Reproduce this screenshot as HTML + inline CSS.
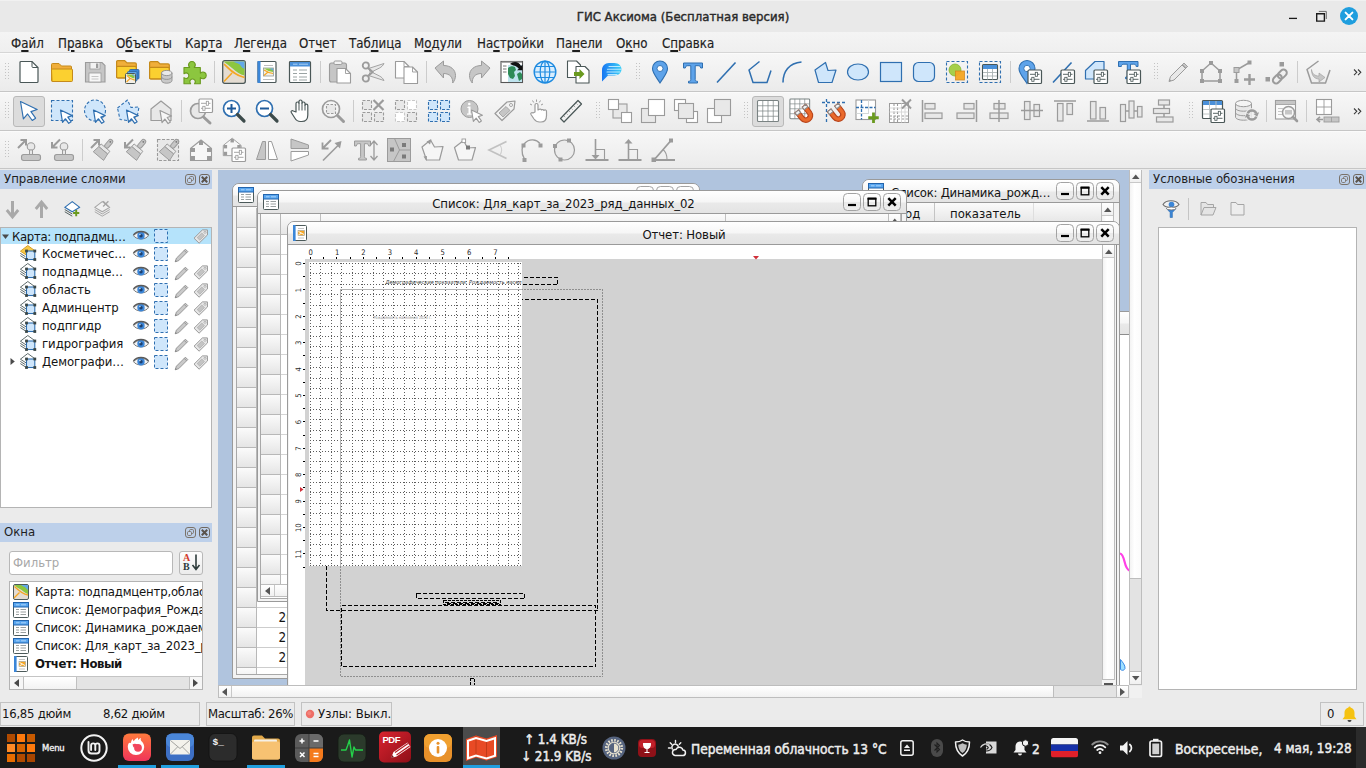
<!DOCTYPE html>
<html lang="ru"><head><meta charset="utf-8"><title>ГИС Аксиома (Бесплатная версия)</title>
<style>
html,body{margin:0;padding:0;background:#ebebeb;}
body{width:1366px;height:768px;overflow:hidden;position:relative;font-family:"DejaVu Sans Condensed","Liberation Sans",sans-serif;font-size:13px;color:#1e1e1e;}
div,svg{position:absolute;box-sizing:border-box;}
svg{overflow:visible;}
.t{white-space:nowrap;line-height:18px;}
u{text-decoration:underline;text-underline-offset:1.500px;text-decoration-thickness:1.600px;}
.clip{overflow:hidden;}
</style></head>
<body>
<!-- chrome -->
<div style="left:0px;top:0px;width:1366px;height:32px;background:#e9e9e9"></div>
<div style="left:0px;top:0px;width:1366px;height:1px;background:#f1f1f1"></div>
<div class="t" style="left:0px;top:8px;width:1366px;text-align:center;font-size:13.050px;line-height:18px;color:#2a2a2a;-webkit-text-stroke:0.400px #2a2a2a">ГИС Аксиома (Бесплатная версия)</div>
<svg style="left:1281px;top:4px;" width="80" height="24" viewBox="0 0 80 24"><path d="M8 14.400h8" stroke="#1a1a1a" stroke-width="1.300" fill="none"/><path d="M35.700 9.700h7.700v7.400h-7.700z" stroke="#1a1a1a" stroke-width="1.400" fill="none"/><path d="M37.800 7.400h7.500v7.600" stroke="#6a6a6a" stroke-width="1" fill="none"/><circle cx="68" cy="12" r="9" fill="#1f9ede"/><path d="M64.600 8.600l6.800 6.800M71.400 8.600l-6.800 6.800" stroke="#fff" stroke-width="2" stroke-linecap="round"/></svg>
<div style="left:0px;top:32px;width:1366px;height:20px;background:linear-gradient(#f4f4f4,#efefef)"></div>
<div style="left:0px;top:52px;width:1366px;height:1px;background:#d6d6d6"></div>
<div class="t" style="left:11px;top:33.5px;font-size:13.200px;line-height:19px;color:#1e1e1e;-webkit-text-stroke:0.150px #1e1e1e">Ф<u>а</u>йл</div>
<div class="t" style="left:58px;top:33.5px;font-size:13.200px;line-height:19px;color:#1e1e1e;-webkit-text-stroke:0.150px #1e1e1e">П<u>р</u>авка</div>
<div class="t" style="left:116px;top:33.5px;font-size:13.200px;line-height:19px;color:#1e1e1e;-webkit-text-stroke:0.150px #1e1e1e">О<u>б</u>ъекты</div>
<div class="t" style="left:185px;top:33.5px;font-size:13.200px;line-height:19px;color:#1e1e1e;-webkit-text-stroke:0.150px #1e1e1e">Кар<u>т</u>а</div>
<div class="t" style="left:234px;top:33.5px;font-size:13.200px;line-height:19px;color:#1e1e1e;-webkit-text-stroke:0.150px #1e1e1e">Л<u>е</u>генда</div>
<div class="t" style="left:299px;top:33.5px;font-size:13.200px;line-height:19px;color:#1e1e1e;-webkit-text-stroke:0.150px #1e1e1e">От<u>ч</u>ет</div>
<div class="t" style="left:349px;top:33.5px;font-size:13.200px;line-height:19px;color:#1e1e1e;-webkit-text-stroke:0.150px #1e1e1e">Таб<u>л</u>ица</div>
<div class="t" style="left:414px;top:33.5px;font-size:13.200px;line-height:19px;color:#1e1e1e;-webkit-text-stroke:0.150px #1e1e1e">М<u>о</u>дули</div>
<div class="t" style="left:477px;top:33.5px;font-size:13.200px;line-height:19px;color:#1e1e1e;-webkit-text-stroke:0.150px #1e1e1e">На<u>с</u>тройки</div>
<div class="t" style="left:556px;top:33.5px;font-size:13.200px;line-height:19px;color:#1e1e1e;-webkit-text-stroke:0.150px #1e1e1e">Па<u>н</u>ели</div>
<div class="t" style="left:616px;top:33.5px;font-size:13.200px;line-height:19px;color:#1e1e1e;-webkit-text-stroke:0.150px #1e1e1e">О<u>к</u>но</div>
<div class="t" style="left:662px;top:33.5px;font-size:13.200px;line-height:19px;color:#1e1e1e;-webkit-text-stroke:0.150px #1e1e1e">С<u>п</u>равка</div>
<div style="left:0px;top:53px;width:1366px;height:38px;background:linear-gradient(#f7f7f7,#ebebeb)"></div>
<div style="left:0px;top:53px;width:1366px;height:1px;background:#fbfbfb"></div>
<div style="left:0px;top:91px;width:1366px;height:1px;background:#c6c6c6"></div>
<div style="left:0px;top:92px;width:1366px;height:38px;background:linear-gradient(#f7f7f7,#ebebeb)"></div>
<div style="left:0px;top:92px;width:1366px;height:1px;background:#fbfbfb"></div>
<div style="left:0px;top:130px;width:1366px;height:1px;background:#c6c6c6"></div>
<div style="left:0px;top:131px;width:1366px;height:37px;background:linear-gradient(#f7f7f7,#ebebeb)"></div>
<div style="left:0px;top:131px;width:1366px;height:1px;background:#fbfbfb"></div>
<div style="left:0px;top:168px;width:1366px;height:1px;background:#c6c6c6"></div>
<div style="left:0px;top:169px;width:1366px;height:534px;background:#ebebeb"></div>
<!-- icons -->
<div style="left:13px;top:96px;width:32px;height:31px;background:#dcdcdc;border:1px solid #b9b9b9;border-radius:3px"></div>
<div style="left:752px;top:96px;width:32px;height:31px;background:#dcdcdc;border:1px solid #b9b9b9;border-radius:3px"></div>
<svg style="left:17px;top:60px;" width="24" height="24" viewBox="0 0 24 24"><path d="M3 2.500a1 1 0 0 1 1-1h11l6 6v14a1 1 0 0 1-1 1h-16a1 1 0 0 1-1-1z" fill="#fff" stroke="#4a5757" stroke-width="1.200"/><path d="M15 1.500v5a1 1 0 0 0 1 1h5" fill="none" stroke="#4a5757" stroke-width="1"/></svg>
<svg style="left:50px;top:60px;" width="24" height="24" viewBox="0 0 24 24"><path d="M1.500 4.500a1 1 0 0 1 1-1h6.500l2.500 2.500h9a1 1 0 0 1 1 1v13.500a1 1 0 0 1-1 1h-18a1 1 0 0 1-1-1z" fill="#f0ae3a" stroke="#c58a1a" stroke-width="1"/><path d="M1.500 10a1 1 0 0 1 1-1h19a1 1 0 0 1 1 1v10.500a1 1 0 0 1-1 1h-18.500a1 1 0 0 1-1-1z" fill="#fbd030" stroke="#c58a1a" stroke-width="1"/></svg>
<svg style="left:83px;top:60px;" width="24" height="24" viewBox="0 0 24 24"><path d="M2.500 2.500h16.500l3 3v16.500h-19.500z" fill="#c6c6c6" stroke="#9b9b9b" stroke-width="1.100"/><rect x="7" y="2.500" width="10" height="6.500" fill="#f2f2f2" stroke="#9b9b9b" stroke-width="0.8"/><rect x="13" y="3.500" width="2.300" height="4.500" fill="#9b9b9b"/><rect x="6" y="13" width="12" height="9" fill="#f7f7f7" stroke="#9b9b9b" stroke-width="0.8"/><path d="M8.500 16.500h7M8.500 19h7" stroke="#c6c6c6" stroke-width="1"/></svg>
<svg style="left:116px;top:60px;" width="24" height="24" viewBox="0 0 24 24"><g transform="translate(0 0) scale(1.230 1.150)"><path d="M0.500 1.500a1 1 0 0 1 1-1h5.500l2 2h6.500a1 1 0 0 1 1 1v11a1 1 0 0 1-1 1h-14a1 1 0 0 1-1-1z" fill="#f0ae3a" stroke="#c58a1a" stroke-width="1"/><path d="M0.500 6.500a1 1 0 0 1 1-1h14a1 1 0 0 1 1 1v8a1 1 0 0 1-1 1h-14a1 1 0 0 1-1-1z" fill="#fbd030" stroke="#c58a1a" stroke-width="1"/></g><rect x="13.500" y="9.500" width="9.500" height="9.500" rx="1" fill="#3b86d8" stroke="#2a5f9e" stroke-width="0.8"/><rect x="11.500" y="11.500" width="9.500" height="9.500" rx="1" fill="#62a8e8" stroke="#2a5f9e" stroke-width="0.8"/><rect x="9.500" y="13.500" width="10" height="10" rx="1" fill="#f4efe6" stroke="#4a5757" stroke-width="1"/><path d="M10.500 14.500h8v4c-3-0.500-5-2-8-4z" fill="#8cc63f"/><path d="M15.500 14.500h3v2.300z" fill="#62a8e8"/><path d="M10.500 22l3.500-3.500M10.800 15.300c2 2.500 4.500 4 8 4.800" stroke="#f5a623" stroke-width="1.100" fill="none"/></svg>
<svg style="left:149px;top:60px;" width="24" height="24" viewBox="0 0 24 24"><g transform="translate(0 1) scale(1.230 1.150)"><path d="M0.500 1.500a1 1 0 0 1 1-1h5.500l2 2h6.500a1 1 0 0 1 1 1v11a1 1 0 0 1-1 1h-14a1 1 0 0 1-1-1z" fill="#f0ae3a" stroke="#c58a1a" stroke-width="1"/><path d="M0.500 6.500a1 1 0 0 1 1-1h14a1 1 0 0 1 1 1v8a1 1 0 0 1-1 1h-14a1 1 0 0 1-1-1z" fill="#fbd030" stroke="#c58a1a" stroke-width="1"/></g><path d="M12.500 13v7.500c0 1.600 2.400 2.700 5.200 2.700s5.300-1.100 5.300-2.700v-7.500z" fill="#c9c9c9" stroke="#8e8e8e" stroke-width="0.9"/><ellipse cx="17.750" cy="13" rx="5.250" ry="2.600" fill="#e9e9e9" stroke="#8e8e8e" stroke-width="0.9"/><path d="M12.500 16.700c0 1.600 2.400 2.700 5.200 2.700s5.300-1.100 5.300-2.700" fill="none" stroke="#8e8e8e" stroke-width="0.9"/></svg>
<svg style="left:182px;top:60px;" width="24" height="24" viewBox="0 0 24 24"><path transform="translate(-1.300 -1.300) scale(1.090)" d="M3 8h5.200c-1.300-1.600-1.200-3.200-0.300-4.300 1.200-1.500 3.600-1.500 4.800 0 0.900 1.100 1 2.700-0.300 4.300h5.600v5.200c1.600-1.300 3.200-1.200 4.300-0.300 1.500 1.200 1.500 3.600 0 4.800-1.100 0.900-2.700 1-4.300-0.300v5.600h-5.300c1-1.400 0.900-2.700 0.100-3.600-1-1.100-2.800-1.100-3.800 0-0.800 0.900-0.900 2.200 0.100 3.600h-6.100v-5.600c1.400 1 2.700 0.900 3.600 0.100 1.100-1 1.100-2.800 0-3.800-0.900-0.800-2.200-0.900-3.600 0.100z" fill="#8cc63f" stroke="#6a9a1f" stroke-width="1" stroke-linejoin="round"/></svg>
<svg style="left:222px;top:60px;" width="24" height="24" viewBox="0 0 24 24"><rect x="0.700" y="0.700" width="22.600" height="22.600" rx="2" fill="#e4dcd2" stroke="#4a5757" stroke-width="1.300"/><path d="M1.500 1.500h21v14c-4.500-1-8.500-4-12.500-7.500-3-2.600-6-4.500-8.500-6.500z" fill="#8cc63f"/><path d="M11.500 1.500h11v7.500c-1.500-1-3-1.500-4-3.500-1.500-2.500-4.500-2-7-4z" fill="#62a8e8"/><path d="M2 21.500l8-8.500M2 4c5 5 11 11.500 20.500 13.500" stroke="#f5a623" stroke-width="1.500" fill="none"/></svg>
<svg style="left:255px;top:60px;" width="24" height="24" viewBox="0 0 24 24"><rect x="3" y="1.500" width="18" height="21" rx="1" fill="#fff" stroke="#4a5757" stroke-width="1.200"/><rect x="2.500" y="1" width="3" height="22" fill="#3b86d8"/><path d="M9 5.500h9M8 19.500h11" stroke="#b5b5b5" stroke-width="0.9"/><rect x="8.500" y="8" width="10" height="8" fill="#f4efe6" stroke="#8e9a9a" stroke-width="0.8"/><path d="M9 8.500h9v3.500c-3-0.300-6-1.500-9-3.500z" fill="#8cc63f"/><path d="M14 8.500h4v2z" fill="#62a8e8"/><path d="M9 15.500l4-3.500M9 10c3 2 5 3 9 3.500" stroke="#f5a623" stroke-width="1.100" fill="none"/></svg>
<svg style="left:288px;top:60px;" width="24" height="24" viewBox="0 0 24 24"><rect x="1.500" y="1.500" width="21" height="21" rx="1" fill="#fff" stroke="#4a5757" stroke-width="1.200"/><rect x="2" y="2" width="20" height="4.500" fill="#4a90d9"/><path d="M5 4.200h4.500M11 4.200h9" stroke="#a9cff5" stroke-width="1"/><path d="M5 10h4M11 10h8M5 13.500h4M11 13.500h8M5 17h4M11 17h8M5 20h4M11 20h8" stroke="#9aa3a3" stroke-width="1"/></svg>
<svg style="left:328px;top:60px;" width="24" height="24" viewBox="0 0 24 24"><rect x="1.500" y="3" width="17" height="19" rx="2" fill="#c6c6c6" stroke="#9b9b9b" stroke-width="1.100"/><rect x="6" y="1" width="8" height="3.500" rx="1.200" fill="#f2f2f2" stroke="#9b9b9b" stroke-width="1"/><path d="M9 8.500h8.500l5 5v9.500h-13.500z" fill="#fff" stroke="#9b9b9b" stroke-width="1.100" stroke-linejoin="round"/><path d="M17.500 8.500v5h5" fill="none" stroke="#9b9b9b" stroke-width="0.9"/></svg>
<svg style="left:361px;top:60px;" width="24" height="24" viewBox="0 0 24 24"><path d="M7.500 8.500l15.500-5c-1 2-2.500 3.500-4.500 4.500l-9 4.500z" fill="#e8e8e8" stroke="#9b9b9b" stroke-width="0.9" stroke-linejoin="round"/><path d="M7.500 15.500l15.500 5c-1-2-2.500-3.500-4.500-4.500l-9-4.500z" fill="#e8e8e8" stroke="#9b9b9b" stroke-width="0.9" stroke-linejoin="round"/><circle cx="4.800" cy="5.500" r="3.100" fill="none" stroke="#9b9b9b" stroke-width="1.800"/><circle cx="4.800" cy="18.500" r="3.100" fill="none" stroke="#9b9b9b" stroke-width="1.800"/><path d="M6.800 7.800l5 4.200-5 4.200" stroke="#9b9b9b" stroke-width="1.800" fill="none"/></svg>
<svg style="left:394px;top:60px;" width="24" height="24" viewBox="0 0 24 24"><path d="M1.500 1.500h8.500l5 5v11.500h-13.500z" fill="#fff" stroke="#9b9b9b" stroke-width="1.100" stroke-linejoin="round"/><path d="M10 1.500v5h5" fill="none" stroke="#9b9b9b" stroke-width="0.9"/><path d="M10 7h8.500l5 5v11.500h-13.500z" fill="#fff" stroke="#9b9b9b" stroke-width="1.100" stroke-linejoin="round"/><path d="M18.500 7v5h5" fill="none" stroke="#9b9b9b" stroke-width="0.9"/></svg>
<svg style="left:434px;top:60px;" width="24" height="24" viewBox="0 0 24 24"><path d="M1 8l8.500-7v4.500c7 0 12 4 12 10 0 3-1.200 5.500-2.800 7.500 0.300-5-2.200-9.500-9.200-9.500v4.500z" fill="#c6c6c6" stroke="#9b9b9b" stroke-width="1" stroke-linejoin="round"/></svg>
<svg style="left:467px;top:60px;" width="24" height="24" viewBox="0 0 24 24"><path d="M23 8l-8.500-7v4.500c-7 0-12 4-12 10 0 3 1.200 5.500 2.800 7.500-0.300-5 2.200-9.500 9.200-9.500v4.500z" fill="#c6c6c6" stroke="#9b9b9b" stroke-width="1" stroke-linejoin="round"/></svg>
<svg style="left:500px;top:60px;" width="24" height="24" viewBox="0 0 24 24"><rect x="1" y="1.500" width="21.500" height="21" fill="#fff" stroke="#555" stroke-width="1.100"/><path d="M1.500 2h20.500" stroke="#8a8a8a" stroke-width="1.400"/><path d="M3 6h3.500M3 9h3.500M3 12h3.500" stroke="#777" stroke-width="1"/><rect x="8" y="5" width="14" height="17" fill="#bfe3ee"/><path d="M8 8c2-2 5-2.500 7-1l1 3-2 2 1 4-2 3-3-1-2-4zM17 14l3-2 2 2v5l-3 2z" fill="#2e8b57"/><path d="M10 4c3-3 9-3 11 2l1.500-1.200v5.500h-5.500l1.800-1.600c-2-3-6-3-8.800-4.700z" fill="#111"/></svg>
<svg style="left:533px;top:60px;" width="24" height="24" viewBox="0 0 24 24"><circle cx="12" cy="12" r="10.800" fill="#d9eefe" stroke="#1e8be0" stroke-width="1.400"/><ellipse cx="12" cy="12" rx="4.800" ry="10.800" fill="none" stroke="#1e8be0" stroke-width="1.200"/><path d="M12 1.200v21.600M1.200 12h21.600M3 6.500h18M3 17.500h18" stroke="#1e8be0" stroke-width="1.200" fill="none"/></svg>
<svg style="left:566px;top:60px;" width="24" height="24" viewBox="0 0 24 24"><path d="M1.500 1h9l4 4v12.500h-13z" fill="#fff" stroke="#4a5757" stroke-width="1.100" stroke-linejoin="round"/><path d="M10 6.500h9l4 4v12.500h-13z" fill="#fff" stroke="#4a5757" stroke-width="1.100" stroke-linejoin="round"/><path d="M8 12h5.500v-3l5 5-5 5v-3h-5.500z" fill="#6a9a1f"/></svg>
<svg style="left:599px;top:60px;" width="24" height="24" viewBox="0 0 24 24"><defs><linearGradient id="chg" x1="0" y1="0" x2="1" y2="0"><stop offset="0" stop-color="#1877f2"/><stop offset="1" stop-color="#3fd0f7"/></linearGradient></defs><path d="M3 21.500v-11.500c0-4 3-7 7-7h5.500c4 0 7 2.800 7 6.300s-3 6.200-7 6.200h-6.500z" fill="url(#chg)"/><path d="M10 6.500h11M8.500 9.300h13.500M8 12h13M9 14.500h9" stroke="#c9f0ff" stroke-width="1.100" stroke-linecap="round" opacity="0.9"/></svg>
<svg style="left:648px;top:60px;" width="24" height="24" viewBox="0 0 24 24"><path d="M12 23c-4-6.500-7.500-10-7.500-14.500a7.500 7.500 0 0 1 15 0c0 4.500-3.500 8-7.500 14.500z" fill="#5ea3ea" stroke="#2f6fb0" stroke-width="1.100"/><circle cx="12" cy="8.500" r="3" fill="#fff" stroke="#2f6fb0" stroke-width="0.9"/></svg>
<svg style="left:681px;top:60px;" width="24" height="24" viewBox="0 0 24 24"><path d="M2.500 3h19v5h-1.800c-0.200-1.600-0.900-2.300-2.500-2.300h-3v13.800c0 1.300 0.600 1.700 2.300 1.800v1.700h-9v-1.700c1.700-0.100 2.300-0.500 2.300-1.800v-13.800h-3c-1.600 0-2.300 0.700-2.500 2.300h-1.800z" fill="#5ea3ea" stroke="#2f6fb0" stroke-width="1" stroke-linejoin="round"/></svg>
<svg style="left:714px;top:60px;" width="24" height="24" viewBox="0 0 24 24"><path d="M3 22.500l18.500-20" stroke="#2f6fb0" stroke-width="1.600" fill="none"/></svg>
<svg style="left:747px;top:60px;" width="24" height="24" viewBox="0 0 24 24"><path d="M12.500 1.500l-10.500 8.500 4 12.500h14l4-12" stroke="#2f6fb0" stroke-width="1.500" fill="none" stroke-linejoin="round"/></svg>
<svg style="left:780px;top:60px;" width="24" height="24" viewBox="0 0 24 24"><path d="M3 22.500c0-11 6-19.500 18.500-20.500" stroke="#2f6fb0" stroke-width="1.600" fill="none"/></svg>
<svg style="left:813px;top:60px;" width="24" height="24" viewBox="0 0 24 24"><path d="M2 10l10.500-7.500 2.500 8 8-0.500-4 12.500h-13.500z" fill="#cfe6fb" stroke="#2f6fb0" stroke-width="1.200" stroke-linejoin="round"/></svg>
<svg style="left:846px;top:60px;" width="24" height="24" viewBox="0 0 24 24"><ellipse cx="12" cy="12" rx="10.500" ry="8" fill="#cfe6fb" stroke="#2f6fb0" stroke-width="1.200"/></svg>
<svg style="left:879px;top:60px;" width="24" height="24" viewBox="0 0 24 24"><rect x="1.500" y="2.500" width="21" height="19" fill="#cfe6fb" stroke="#2f6fb0" stroke-width="1.200"/></svg>
<svg style="left:912px;top:60px;" width="24" height="24" viewBox="0 0 24 24"><rect x="1.500" y="2.500" width="21" height="19" rx="5" fill="#cfe6fb" stroke="#2f6fb0" stroke-width="1.200"/></svg>
<svg style="left:945px;top:60px;" width="24" height="24" viewBox="0 0 24 24"><rect x="1.500" y="1.500" width="21" height="21" fill="none" stroke="#2f6fb0" stroke-width="1.100" stroke-dasharray="3 2"/><circle cx="10" cy="10" r="6" fill="#a6cf4a" stroke="#84b52c" stroke-width="0.8"/><rect x="10.500" y="11" width="9" height="9" fill="#f5a623" stroke="#d4851a" stroke-width="0.8" opacity="0.95"/></svg>
<svg style="left:978px;top:60px;" width="24" height="24" viewBox="0 0 24 24"><rect x="1.500" y="1.500" width="21" height="21" fill="none" stroke="#2f6fb0" stroke-width="1.100" stroke-dasharray="3 2"/><rect x="4.500" y="4.500" width="15" height="15" rx="1" fill="#fff" stroke="#4a5757" stroke-width="1.100"/><rect x="5" y="5" width="14" height="4" fill="#4a90d9"/><path d="M9.500 9v10.500M14.500 9v10.500M5 12.500h14M5 16h14" stroke="#aab3b3" stroke-width="0.9"/></svg>
<svg style="left:1018px;top:60px;" width="24" height="24" viewBox="0 0 24 24"><path d="M9 23.500c-4-6.500-8-10-8-15a8 8 0 0 1 16 0c0 2-1 4-2 6z" fill="#5ea3ea" stroke="#2f6fb0" stroke-width="1.100"/><circle cx="9" cy="8.500" r="3.200" fill="#fff" stroke="#2f6fb0" stroke-width="0.9"/><rect x="10" y="10" width="13.500" height="13.500" rx="1" fill="#fff" stroke="#4a5757" stroke-width="1.200"/><path d="M12 14.300h9.500M12 19.300h9.500" stroke="#4a5757" stroke-width="0.9"/><rect x="17.300" y="12.300" width="2.200" height="4" fill="#fff" stroke="#4a5757" stroke-width="0.8"/><rect x="13.800" y="17.300" width="2.200" height="4" fill="#fff" stroke="#4a5757" stroke-width="0.8"/></svg>
<svg style="left:1051px;top:60px;" width="24" height="24" viewBox="0 0 24 24"><path d="M2 22.500l18.500-20" stroke="#2f6fb0" stroke-width="1.600" fill="none"/><rect x="10" y="10" width="13.500" height="13.500" rx="1" fill="#fff" stroke="#4a5757" stroke-width="1.200"/><path d="M12 14.300h9.500M12 19.300h9.500" stroke="#4a5757" stroke-width="0.9"/><rect x="17.300" y="12.300" width="2.200" height="4" fill="#fff" stroke="#4a5757" stroke-width="0.8"/><rect x="13.800" y="17.300" width="2.200" height="4" fill="#fff" stroke="#4a5757" stroke-width="0.8"/></svg>
<svg style="left:1084px;top:60px;" width="24" height="24" viewBox="0 0 24 24"><path d="M1.500 10.500l9.500-9h9v17.500h-18.500z" fill="#cfe6fb" stroke="#2f6fb0" stroke-width="1.200" stroke-linejoin="round"/><rect x="10" y="10" width="13.500" height="13.500" rx="1" fill="#fff" stroke="#4a5757" stroke-width="1.200"/><path d="M12 14.300h9.500M12 19.300h9.500" stroke="#4a5757" stroke-width="0.9"/><rect x="17.300" y="12.300" width="2.200" height="4" fill="#fff" stroke="#4a5757" stroke-width="0.8"/><rect x="13.800" y="17.300" width="2.200" height="4" fill="#fff" stroke="#4a5757" stroke-width="0.8"/></svg>
<svg style="left:1117px;top:60px;" width="24" height="24" viewBox="0 0 24 24"><path d="M1.500 1.500h19.500v5h-1.800c-0.200-1.600-0.900-2.300-2.500-2.300h-3.200v14.500h-5v-1.500c1.200-0.100 1.800-0.500 1.800-1.800v-11.200h-3.500c-1.600 0-2.300 0.700-2.500 2.300h-2.800z" fill="#5ea3ea" stroke="#2f6fb0" stroke-width="1" stroke-linejoin="round"/><rect x="10" y="10" width="13.500" height="13.500" rx="1" fill="#fff" stroke="#4a5757" stroke-width="1.200"/><path d="M12 14.300h9.500M12 19.300h9.500" stroke="#4a5757" stroke-width="0.9"/><rect x="17.300" y="12.300" width="2.200" height="4" fill="#fff" stroke="#4a5757" stroke-width="0.8"/><rect x="13.800" y="17.300" width="2.200" height="4" fill="#fff" stroke="#4a5757" stroke-width="0.8"/></svg>
<svg style="left:1166px;top:60px;" width="24" height="24" viewBox="0 0 24 24"><path d="M3 21.500l1.500-5 13.500-13.500 3.500 3.500-13.500 13.500z" fill="#e8e8e8" stroke="#9b9b9b" stroke-width="1" stroke-linejoin="round"/><path d="M16 5l3.500 3.500" stroke="#9b9b9b" stroke-width="1"/><path d="M18 3l3.500 3.500-1.500 1.500-3.500-3.500z" fill="#c6c6c6" stroke="#9b9b9b" stroke-width="0.8"/><path d="M3 21.500l0.700-2.400 1.700 1.700z" fill="#9b9b9b"/></svg>
<svg style="left:1199px;top:60px;" width="24" height="24" viewBox="0 0 24 24"><path d="M3 11l9-8 9 8v10h-18z" fill="none" stroke="#9b9b9b" stroke-width="1.500" stroke-linejoin="round"/><rect x="10" y="1" width="4" height="4" fill="#9b9b9b"/><rect x="1" y="9" width="4" height="4" fill="#9b9b9b"/><rect x="19" y="9" width="4" height="4" fill="#9b9b9b"/><rect x="1" y="19" width="4" height="4" fill="#9b9b9b"/><rect x="19" y="19" width="4" height="4" fill="#9b9b9b"/></svg>
<svg style="left:1232px;top:60px;" width="24" height="24" viewBox="0 0 24 24"><path d="M4.500 21v-11l13-7.500" stroke="#9b9b9b" stroke-width="1.500" fill="none"/><rect x="2" y="7.500" width="5" height="5" fill="#c6c6c6" stroke="#9b9b9b" stroke-width="1"/><rect x="15.500" y="0.500" width="4" height="4" fill="#9b9b9b"/><rect x="2.500" y="19" width="4" height="4" fill="#9b9b9b"/><path d="M17.500 14v11M12 19.500h11" stroke="#9b9b9b" stroke-width="2.400"/></svg>
<svg style="left:1265px;top:60px;" width="24" height="24" viewBox="0 0 24 24"><rect x="14.500" y="2" width="4.500" height="4.500" fill="#9b9b9b"/><rect x="0.500" y="17" width="4.500" height="4.500" fill="#9b9b9b"/><g transform="rotate(-45 15 16)" fill="none" stroke="#9b9b9b" stroke-width="2"><rect x="6" y="13" width="10" height="6.500" rx="3.250"/><rect x="13" y="13" width="10" height="6.500" rx="3.250"/></g></svg>
<svg style="left:1305px;top:60px;" width="24" height="24" viewBox="0 0 24 24"><path d="M13.500 1l-11.500 8.500 4.500 13.500h14l4.500-13" stroke="#9b9b9b" stroke-width="1.500" fill="none" stroke-linejoin="round"/><path d="M6.500 9.500c0.500 4 3 6.500 7.500 6.500v-3l6 4.500-6 4.500v-3c-5 0-7.500-4-7.500-9.500z" fill="#c6c6c6" stroke="#9b9b9b" stroke-width="0.6"/></svg>
<svg style="left:17px;top:99px;" width="24" height="24" viewBox="0 0 24 24"><path transform="translate(3.5 2.5) scale(1.45)" d="M0 0l11.500 5.500-4.300 1.500 3.200 4.500-2.300 1.600-3.200-4.500-2.900 3.400z" fill="#fff" stroke="#2f6fb0" stroke-width="0.8" stroke-linejoin="round"/></svg>
<svg style="left:50px;top:99px;" width="24" height="24" viewBox="0 0 24 24"><rect x="1.500" y="1.500" width="21" height="20" fill="#cfe6fb" stroke="#2f6fb0" stroke-width="1.100" stroke-dasharray="3 2"/><path transform="translate(10.5 11) scale(1.02)" d="M0 0l11.500 5.500-4.300 1.500 3.200 4.500-2.300 1.600-3.200-4.500-2.900 3.400z" fill="#fff" stroke="#2f6fb0" stroke-width="1.2" stroke-linejoin="round"/></svg>
<svg style="left:83px;top:99px;" width="24" height="24" viewBox="0 0 24 24"><circle cx="12" cy="11.500" r="10.500" fill="#cfe6fb" stroke="#2f6fb0" stroke-width="1.100" stroke-dasharray="3 2"/><path transform="translate(10.5 11) scale(1.02)" d="M0 0l11.500 5.500-4.300 1.500 3.200 4.500-2.300 1.600-3.200-4.500-2.900 3.400z" fill="#fff" stroke="#2f6fb0" stroke-width="1.2" stroke-linejoin="round"/></svg>
<svg style="left:116px;top:99px;" width="24" height="24" viewBox="0 0 24 24"><path d="M1.500 9l10-8 3.500 7.500 8-0.500-1.500 8-7 6-10.500-1.500z" fill="#cfe6fb" stroke="#2f6fb0" stroke-width="1.100" stroke-dasharray="3 2" stroke-linejoin="round"/><path transform="translate(10.5 11) scale(1.02)" d="M0 0l11.500 5.500-4.300 1.500 3.200 4.500-2.300 1.600-3.200-4.500-2.900 3.400z" fill="#fff" stroke="#2f6fb0" stroke-width="1.2" stroke-linejoin="round"/></svg>
<svg style="left:149px;top:99px;" width="24" height="24" viewBox="0 0 24 24"><path d="M2 10l10-8 10 8v11.500h-20z" fill="#e8e8e8" stroke="#9b9b9b" stroke-width="1.200" stroke-linejoin="round"/><path transform="translate(11 11.5) scale(1.0)" d="M0 0l11.500 5.500-4.300 1.500 3.200 4.500-2.300 1.600-3.200-4.500-2.900 3.400z" fill="#f6f6f6" stroke="#9b9b9b" stroke-width="1.2" stroke-linejoin="round"/></svg>
<svg style="left:189px;top:99px;" width="24" height="24" viewBox="0 0 24 24"><circle cx="9" cy="12" r="7.500" fill="#e8e8e8" stroke="#9b9b9b" stroke-width="1.700"/><path d="M14.500 18l6.500 6" stroke="#9b9b9b" stroke-width="3" stroke-linecap="round"/><g transform="translate(0 -10)"><rect x="10" y="10" width="13.500" height="13.500" rx="1" fill="#fff" stroke="#9b9b9b" stroke-width="1.200"/><path d="M12 14.300h9.500M12 19.300h9.500" stroke="#9b9b9b" stroke-width="0.9"/><rect x="17.300" y="12.300" width="2.200" height="4" fill="#fff" stroke="#9b9b9b" stroke-width="0.8"/><rect x="13.800" y="17.300" width="2.200" height="4" fill="#fff" stroke="#9b9b9b" stroke-width="0.8"/></g></svg>
<svg style="left:222px;top:99px;" width="24" height="24" viewBox="0 0 24 24"><circle cx="9.500" cy="9.500" r="8" fill="#fff" stroke="#2f6fb0" stroke-width="1.700"/><path d="M5 9.500h9M9.500 5v9" stroke="#1f5a9a" stroke-width="2"/><path d="M15.500 15.500l6.500 6.500" stroke="#3c4a4a" stroke-width="3.200" stroke-linecap="round"/></svg>
<svg style="left:255px;top:99px;" width="24" height="24" viewBox="0 0 24 24"><circle cx="9.500" cy="9.500" r="8" fill="#fff" stroke="#2f6fb0" stroke-width="1.700"/><path d="M5 9.500h9" stroke="#1f5a9a" stroke-width="2"/><path d="M15.500 15.500l6.500 6.500" stroke="#3c4a4a" stroke-width="3.200" stroke-linecap="round"/></svg>
<svg style="left:288px;top:99px;" width="24" height="24" viewBox="0 0 24 24"><path d="M8 13v-8.500a1.500 1.500 0 0 1 3 0v-2a1.500 1.500 0 0 1 3 0v2a1.500 1.500 0 0 1 3 0v2a1.400 1.400 0 0 1 2.800 0v9.500c0 4-2 6.500-6 6.500h-1.500c-2.500 0-4-1-5.500-3.500l-3.500-5.500c-0.800-1.300 0.800-2.600 2-1.500z" fill="#fff" stroke="#4a5757" stroke-width="1.200" stroke-linejoin="round"/><path d="M11 4.500v7M14 4.500v7M17 6.500v5" stroke="#4a5757" stroke-width="1" fill="none"/></svg>
<svg style="left:321px;top:99px;" width="24" height="24" viewBox="0 0 24 24"><circle cx="10" cy="10" r="8.500" fill="#f4f4f4" stroke="#9b9b9b" stroke-width="1.700"/><rect x="5.500" y="5.500" width="9" height="9" fill="#e8e8e8" stroke="#9b9b9b" stroke-width="1.100" stroke-dasharray="2.500 1.500"/><path d="M16.500 16.500l6 6" stroke="#9b9b9b" stroke-width="3" stroke-linecap="round"/></svg>
<svg style="left:361px;top:99px;" width="24" height="24" viewBox="0 0 24 24"><rect x="1.5" y="1.5" width="9" height="9" fill="#e8e8e8" stroke="#9b9b9b" stroke-width="1.1" stroke-dasharray="3 1.500"/><rect x="1.5" y="13.5" width="9" height="9" fill="#e8e8e8" stroke="#9b9b9b" stroke-width="1.1" stroke-dasharray="3 1.500"/><rect x="13.5" y="13.5" width="9" height="9" fill="#e8e8e8" stroke="#9b9b9b" stroke-width="1.1" stroke-dasharray="3 1.500"/><path d="M12.500 1l10 10M22.500 1l-10 10" stroke="#9b9b9b" stroke-width="2.200"/></svg>
<svg style="left:394px;top:99px;" width="24" height="24" viewBox="0 0 24 24"><rect x="1.5" y="1.5" width="9" height="9" fill="#e8e8e8" stroke="#9b9b9b" stroke-width="1.1" stroke-dasharray="3 1.500"/><rect x="13.5" y="1.5" width="9" height="9" fill="#fff" stroke="#c9c9c9" stroke-width="1.1" stroke-dasharray="3 1.500"/><rect x="1.5" y="13.5" width="9" height="9" fill="#fff" stroke="#c9c9c9" stroke-width="1.1" stroke-dasharray="3 1.500"/><rect x="13.5" y="13.5" width="9" height="9" fill="#e8e8e8" stroke="#9b9b9b" stroke-width="1.1" stroke-dasharray="3 1.500"/></svg>
<svg style="left:427px;top:99px;" width="24" height="24" viewBox="0 0 24 24"><rect x="1.5" y="1.5" width="9" height="9" fill="#cfe6fb" stroke="#2f6fb0" stroke-width="1.1" stroke-dasharray="3 1.500"/><rect x="13.5" y="1.5" width="9" height="9" fill="#cfe6fb" stroke="#2f6fb0" stroke-width="1.1" stroke-dasharray="3 1.500"/><rect x="1.5" y="13.5" width="9" height="9" fill="#cfe6fb" stroke="#2f6fb0" stroke-width="1.1" stroke-dasharray="3 1.500"/><rect x="13.5" y="13.5" width="9" height="9" fill="#cfe6fb" stroke="#2f6fb0" stroke-width="1.1" stroke-dasharray="3 1.500"/></svg>
<svg style="left:460px;top:99px;" width="24" height="24" viewBox="0 0 24 24"><circle cx="9.500" cy="10" r="8.500" fill="#c6c6c6" stroke="#9b9b9b" stroke-width="1"/><path d="M8 7.500h2.500v7h1.500v1.300h-5v-1.300h1.500v-5.500h-1.500z" fill="#fff"/><circle cx="9.300" cy="5" r="1.300" fill="#fff"/><path transform="translate(11.5 11) scale(0.95)" d="M0 0l11.500 5.500-4.300 1.500 3.200 4.500-2.300 1.600-3.200-4.500-2.900 3.400z" fill="#fff" stroke="#9b9b9b" stroke-width="1.2" stroke-linejoin="round"/></svg>
<svg style="left:493px;top:99px;" width="24" height="24" viewBox="0 0 24 24"><path d="M2 14.500l12-11.500 8-1 -1 8-12 11.500z" fill="#f2f2f2" stroke="#9b9b9b" stroke-width="1.200" stroke-linejoin="round"/><circle cx="18" cy="6" r="1.500" fill="#fff" stroke="#9b9b9b" stroke-width="0.900"/><path d="M6 14l7-6.500 4 4-7 6.500z" fill="#c6c6c6" stroke="#9b9b9b" stroke-width="0.800"/></svg>
<svg style="left:526px;top:99px;" width="24" height="24" viewBox="0 0 24 24"><path d="M9 13v-7a1.500 1.500 0 0 1 3 0v5l1-0.500a1.500 1.500 0 0 1 2.500 0.500 1.500 1.500 0 0 1 2.500 0.500 1.400 1.400 0 0 1 2.500 1v4c0 4-2 6.500-5.500 6.500h-1.500c-2.500 0-4-1-5.500-3l-3-4.500c-0.800-1.300 0.800-2.500 2-1.500z" fill="#fff" stroke="#9b9b9b" stroke-width="1.200" stroke-linejoin="round"/><path d="M6.500 1.500l1.200 2M10.500 0.500v2.300M14.500 1.500l-1.200 2M4 5l2 1M17 5l-2 1" stroke="#9b9b9b" stroke-width="1" fill="none"/></svg>
<svg style="left:559px;top:99px;" width="24" height="24" viewBox="0 0 24 24"><path d="M1.500 19.500l17.500-18 3.500 3.500-17.500 18z" fill="#f2f2f2" stroke="#4a5757" stroke-width="1.200" stroke-linejoin="round"/><path d="M5 17l1.200 1.200M7.500 14.500l1.200 1.200M10 12l1.200 1.200M12.500 9.500l1.200 1.200M15 7l1.200 1.200M17.500 4.500l1.200 1.200" stroke="#9b9b9b" stroke-width="0.900"/></svg>
<svg style="left:608px;top:99px;" width="24" height="24" viewBox="0 0 24 24"><rect x="5" y="5" width="14" height="14" fill="#e8e8e8" stroke="#9b9b9b" stroke-width="1.1" /><rect x="0.5" y="0.5" width="10" height="10" fill="#fff" stroke="#9b9b9b" stroke-width="1.1" /><rect x="13.5" y="13.5" width="10" height="10" fill="#fff" stroke="#9b9b9b" stroke-width="1.1" /></svg>
<svg style="left:641px;top:99px;" width="24" height="24" viewBox="0 0 24 24"><rect x="0.5" y="9.5" width="14" height="14" fill="#e8e8e8" stroke="#9b9b9b" stroke-width="1.1" /><rect x="7.5" y="0.5" width="16" height="16" fill="#fff" stroke="#9b9b9b" stroke-width="1.1" /></svg>
<svg style="left:674px;top:99px;" width="24" height="24" viewBox="0 0 24 24"><rect x="0.5" y="0.5" width="11" height="11" fill="#fff" stroke="#9b9b9b" stroke-width="1.1" /><rect x="12.5" y="12.5" width="11" height="11" fill="#fff" stroke="#9b9b9b" stroke-width="1.1" /><rect x="4.5" y="4.5" width="15" height="15" fill="#e8e8e8" stroke="#9b9b9b" stroke-width="1.1" /></svg>
<svg style="left:707px;top:99px;" width="24" height="24" viewBox="0 0 24 24"><rect x="0.5" y="9.5" width="14" height="14" fill="#fff" stroke="#9b9b9b" stroke-width="1.1" /><rect x="7.5" y="0.5" width="16" height="16" fill="#e8e8e8" stroke="#9b9b9b" stroke-width="1.1" /></svg>
<svg style="left:756px;top:99px;" width="24" height="24" viewBox="0 0 24 24"><rect x="1.500" y="1.500" width="21" height="21" rx="1" fill="#fff" stroke="#7a8383" stroke-width="1.100"/><path d="M6.750 1.500v21M12 1.500v21M17.250 1.500v21M1.500 6.750h21M1.500 12h21M1.500 17.250h21" stroke="#7a8383" stroke-width="0.7"/></svg>
<svg style="left:789px;top:99px;" width="24" height="24" viewBox="0 0 24 24"><g transform="translate(-0.500 -1.500) scale(0.940)"><rect x="1.500" y="1.500" width="21" height="21" rx="1" fill="#fff" stroke="#7a8383" stroke-width="1.100"/><path d="M6.750 1.500v21M12 1.500v21M17.250 1.500v21M1.500 6.750h21M1.500 12h21M1.500 17.250h21" stroke="#7a8383" stroke-width="0.7"/></g><g transform="translate(16 15.5) rotate(-38) scale(1.25)"><path d="M-5.500 -6v7a5.500 5.500 0 0 0 11 0v-7h-3.600v7a1.900 1.900 0 0 1-3.800 0v-7z" fill="#ea6a2c" stroke="#b8431a" stroke-width="0.9"/><path d="M-5.500 -6h3.600v2.600h-3.600zM1.900 -6h3.600v2.600h-3.600z" fill="#f4f4f4" stroke="#8a8a8a" stroke-width="0.8"/></g></svg>
<svg style="left:822px;top:99px;" width="24" height="24" viewBox="0 0 24 24"><path d="M0 3.500h23M4.500 0v24" stroke="#2f6fb0" stroke-width="1.300" stroke-dasharray="3 2" fill="none"/><g transform="translate(15.5 14.5) rotate(-38) scale(1.25)"><path d="M-5.500 -6v7a5.500 5.500 0 0 0 11 0v-7h-3.600v7a1.900 1.900 0 0 1-3.800 0v-7z" fill="#ea6a2c" stroke="#b8431a" stroke-width="0.9"/><path d="M-5.500 -6h3.600v2.600h-3.600zM1.900 -6h3.600v2.600h-3.600z" fill="#f4f4f4" stroke="#8a8a8a" stroke-width="0.8"/></g></svg>
<svg style="left:855px;top:99px;" width="24" height="24" viewBox="0 0 24 24"><rect x="1" y="1" width="19.500" height="19.500" fill="#fff" stroke="#9b9b9b" stroke-width="1.100"/><path d="M1 8.500h19.500M6.500 1v19.500" stroke="#2f6fb0" stroke-width="1.300" stroke-dasharray="3 1.500"/><path d="M13.500 1v14M1 14.500h12" stroke="#cfd4d4" stroke-width="0.900"/><path d="M18.500 13.500v10.500M13.250 18.750h10.500" stroke="#6a9a1f" stroke-width="2.800"/></svg>
<svg style="left:888px;top:99px;" width="24" height="24" viewBox="0 0 24 24"><rect x="1.500" y="4.500" width="19" height="19" fill="#fff" stroke="#9b9b9b" stroke-width="1"/><path d="M6 4.500v19M9.500 4.500v19M1.500 17h19M1.500 20h19" stroke="#9b9b9b" stroke-width="1.100" stroke-dasharray="2.500 1.500"/><path d="M13.500 4.500v19M17 4.500v19M1.500 9h19M1.500 13h19" stroke="#d6d6d6" stroke-width="0.900"/><path d="M14 0.500l9 9M23 0.500l-9 9" stroke="#9b9b9b" stroke-width="2"/></svg>
<svg style="left:921px;top:99px;" width="24" height="24" viewBox="0 0 24 24"><path d="M1.500 1v22" stroke="#9b9b9b" stroke-width="1.500"/><rect x="4" y="4.5" width="10" height="5.5" fill="#e8e8e8" stroke="#9b9b9b" stroke-width="1.2" /><rect x="4" y="14" width="17" height="5.5" fill="#e8e8e8" stroke="#9b9b9b" stroke-width="1.2" /></svg>
<svg style="left:954px;top:99px;" width="24" height="24" viewBox="0 0 24 24"><path d="M22.500 1v22" stroke="#9b9b9b" stroke-width="1.500"/><rect x="10" y="4.5" width="10" height="5.5" fill="#e8e8e8" stroke="#9b9b9b" stroke-width="1.2" /><rect x="3" y="14" width="17" height="5.5" fill="#e8e8e8" stroke="#9b9b9b" stroke-width="1.2" /></svg>
<svg style="left:987px;top:99px;" width="24" height="24" viewBox="0 0 24 24"><rect x="7" y="4.5" width="11" height="5.5" fill="#e8e8e8" stroke="#9b9b9b" stroke-width="1.2" /><rect x="3" y="14" width="18" height="5.5" fill="#e8e8e8" stroke="#9b9b9b" stroke-width="1.2" /><path d="M12 1v22" stroke="#9b9b9b" stroke-width="1.500"/></svg>
<svg style="left:1020px;top:99px;" width="24" height="24" viewBox="0 0 24 24"><rect x="4.5" y="2.5" width="5.5" height="18" fill="#e8e8e8" stroke="#9b9b9b" stroke-width="1.2" /><rect x="14" y="5.5" width="5.5" height="12" fill="#e8e8e8" stroke="#9b9b9b" stroke-width="1.2" /><path d="M1 11.500h22" stroke="#9b9b9b" stroke-width="1.500"/></svg>
<svg style="left:1053px;top:99px;" width="24" height="24" viewBox="0 0 24 24"><path d="M1 2h22" stroke="#9b9b9b" stroke-width="1.500"/><rect x="4.5" y="4.5" width="5.5" height="17.5" fill="#e8e8e8" stroke="#9b9b9b" stroke-width="1.2" /><rect x="14" y="4.5" width="5.5" height="11" fill="#e8e8e8" stroke="#9b9b9b" stroke-width="1.2" /></svg>
<svg style="left:1086px;top:99px;" width="24" height="24" viewBox="0 0 24 24"><path d="M1 22h22" stroke="#9b9b9b" stroke-width="1.500"/><rect x="4.5" y="2.5" width="5.5" height="17.5" fill="#e8e8e8" stroke="#9b9b9b" stroke-width="1.2" /><rect x="14" y="8.5" width="5.5" height="11.5" fill="#e8e8e8" stroke="#9b9b9b" stroke-width="1.2" /></svg>
<svg style="left:1119px;top:99px;" width="24" height="24" viewBox="0 0 24 24"><path d="M5 12h15" stroke="#9b9b9b" stroke-width="1.500"/><rect x="1.5" y="5.5" width="5" height="17" fill="#e8e8e8" stroke="#9b9b9b" stroke-width="1.2" /><rect x="10" y="2" width="5" height="17" fill="#e8e8e8" stroke="#9b9b9b" stroke-width="1.2" /><rect x="18.5" y="7.5" width="4.5" height="10.5" fill="#e8e8e8" stroke="#9b9b9b" stroke-width="1.2" /></svg>
<svg style="left:1152px;top:99px;" width="24" height="24" viewBox="0 0 24 24"><path d="M12 4v16" stroke="#9b9b9b" stroke-width="1.500"/><rect x="6.5" y="1" width="11" height="5" fill="#e8e8e8" stroke="#9b9b9b" stroke-width="1.2" /><rect x="1.5" y="9.5" width="16" height="5" fill="#e8e8e8" stroke="#9b9b9b" stroke-width="1.2" /><rect x="4.5" y="18" width="16.5" height="5" fill="#e8e8e8" stroke="#9b9b9b" stroke-width="1.2" /></svg>
<svg style="left:1201px;top:99px;" width="24" height="24" viewBox="0 0 24 24"><rect x="1.500" y="1.500" width="20" height="18" rx="1" fill="#fff" stroke="#4a5757" stroke-width="1.200"/><rect x="2" y="2" width="19" height="4" fill="#4a90d9"/><path d="M8.500 2v17M15 2v17M2 10.500h19M2 15h19" stroke="#b9c0c0" stroke-width="0.900"/><rect x="10" y="10" width="13.500" height="13.500" rx="1" fill="#fff" stroke="#4a5757" stroke-width="1.200"/><path d="M12 14.300h9.500M12 19.300h9.500" stroke="#4a5757" stroke-width="0.9"/><rect x="17.300" y="12.300" width="2.200" height="4" fill="#fff" stroke="#4a5757" stroke-width="0.8"/><rect x="13.800" y="17.300" width="2.200" height="4" fill="#fff" stroke="#4a5757" stroke-width="0.8"/></svg>
<svg style="left:1234px;top:99px;" width="24" height="24" viewBox="0 0 24 24"><path d="M1.500 4.500v13.500c0 1.800 3.500 3.200 8 3.200s8-1.400 8-3.200v-13.500z" fill="#e8e8e8" stroke="#9b9b9b" stroke-width="1"/><ellipse cx="9.500" cy="4.500" rx="8" ry="3.200" fill="#f4f4f4" stroke="#9b9b9b" stroke-width="1"/><path d="M1.500 9c0 1.800 3.500 3.200 8 3.200s8-1.400 8-3.200M1.500 13.500c0 1.800 3.500 3.200 8 3.200s8-1.400 8-3.200" fill="none" stroke="#9b9b9b" stroke-width="1"/><circle cx="18" cy="16" r="7" fill="#f0f0f0" opacity="0.85"/><path d="M13.770 14.460A4.500 4.500 0 0 1 22.230 14.460M22.230 17.540A4.500 4.500 0 0 1 13.770 17.540" fill="none" stroke="#9b9b9b" stroke-width="2.400"/><path d="M23.300 17.800l1.800-4.600-5.600 1.900zM12.700 14.200l-1.800 4.600 5.600-1.900z" fill="#9b9b9b"/></svg>
<svg style="left:1274px;top:99px;" width="24" height="24" viewBox="0 0 24 24"><rect x="1.500" y="1.500" width="20" height="18.500" fill="#fbfbfb" stroke="#9b9b9b" stroke-width="1.100"/><rect x="1.500" y="1.500" width="20" height="4" fill="#c6c6c6" stroke="#9b9b9b" stroke-width="0.800"/><path d="M4 9.500h5M4 12.500h5M4 15.500h5" stroke="#c6c6c6" stroke-width="1.100"/><circle cx="14.500" cy="13.500" r="6" fill="#f7f7f7" stroke="#9b9b9b" stroke-width="1.500"/><rect x="11" y="11" width="7" height="4.500" fill="#c6c6c6"/><path d="M19 18l4 4" stroke="#9b9b9b" stroke-width="2.600" stroke-linecap="round"/></svg>
<svg style="left:1314px;top:99px;" width="24" height="24" viewBox="0 0 24 24"><rect x="2.500" y="0.500" width="15" height="15" fill="#fff" stroke="#9b9b9b" stroke-width="1.100"/><path d="M10 0.500v15M2.500 8h15" stroke="#9b9b9b" stroke-width="0.900"/><rect x="10" y="18" width="15" height="5" fill="#c6c6c6" stroke="#9b9b9b" stroke-width="0.900"/><path d="M17.500 18v5" stroke="#9b9b9b" stroke-width="0.800"/><path d="M9 20.500h-5.500M6 17.800l-3 2.700 3 2.700" stroke="#9b9b9b" stroke-width="1.600" fill="none"/></svg>
<svg style="left:17px;top:138px;" width="24" height="24" viewBox="0 0 24 24"><circle cx="14" cy="8.500" r="3.800" fill="#e8e8e8" stroke="#9b9b9b" stroke-width="1.100"/><path d="M12.500 12h3v5h-3z" fill="#e8e8e8" stroke="#9b9b9b" stroke-width="1"/><rect x="4.500" y="16.500" width="19" height="6" rx="2.200" fill="#c6c6c6" stroke="#9b9b9b" stroke-width="1.100"/><path d="M1 10l7-7M3.500 2h5.500v5.500" stroke="#9b9b9b" stroke-width="2" fill="none"/></svg>
<svg style="left:50px;top:138px;" width="24" height="24" viewBox="0 0 24 24"><circle cx="14" cy="8.500" r="3.800" fill="#e8e8e8" stroke="#9b9b9b" stroke-width="1.100"/><path d="M12.500 12h3v5h-3z" fill="#e8e8e8" stroke="#9b9b9b" stroke-width="1"/><rect x="4.500" y="16.500" width="19" height="6" rx="2.200" fill="#c6c6c6" stroke="#9b9b9b" stroke-width="1.100"/><path d="M10 1.500l-7 7M2 4v5.500h5.500" stroke="#9b9b9b" stroke-width="2" fill="none"/></svg>
<svg style="left:90px;top:138px;" width="24" height="24" viewBox="0 0 24 24"><g transform="rotate(40 14 11)"><rect x="12" y="-1" width="4.500" height="10" rx="2.200" fill="#c6c6c6" stroke="#9b9b9b" stroke-width="1"/><circle cx="14.250" cy="1.500" r="0.900" fill="#777"/><path d="M8.500 9h11.500v3.500h-11.500z" fill="#e8e8e8" stroke="#9b9b9b" stroke-width="0.900"/><path d="M8.500 12.500h11.500l1 7.500h-13.500z" fill="#c6c6c6" stroke="#9b9b9b" stroke-width="0.900"/></g><path d="M1 10l7-7M3.500 2h5.500v5.500" stroke="#9b9b9b" stroke-width="2" fill="none"/></svg>
<svg style="left:123px;top:138px;" width="24" height="24" viewBox="0 0 24 24"><g transform="rotate(40 14 11)"><rect x="12" y="-1" width="4.500" height="10" rx="2.200" fill="#c6c6c6" stroke="#9b9b9b" stroke-width="1"/><circle cx="14.250" cy="1.500" r="0.900" fill="#777"/><path d="M8.500 9h11.500v3.500h-11.500z" fill="#e8e8e8" stroke="#9b9b9b" stroke-width="0.900"/><path d="M8.500 12.500h11.500l1 7.500h-13.500z" fill="#c6c6c6" stroke="#9b9b9b" stroke-width="0.900"/></g><path d="M10 1.500l-7 7M2 4v5.500h5.500" stroke="#9b9b9b" stroke-width="2" fill="none"/></svg>
<svg style="left:156px;top:138px;" width="24" height="24" viewBox="0 0 24 24"><rect x="1.500" y="1.500" width="21" height="21" fill="#e8e8e8" stroke="#9b9b9b" stroke-width="1.100" stroke-dasharray="3 1.500"/><g transform="rotate(40 14 11)"><rect x="12" y="-1" width="4.500" height="10" rx="2.200" fill="#c6c6c6" stroke="#9b9b9b" stroke-width="1"/><circle cx="14.250" cy="1.500" r="0.900" fill="#777"/><path d="M8.500 9h11.500v3.500h-11.500z" fill="#e8e8e8" stroke="#9b9b9b" stroke-width="0.900"/><path d="M8.500 12.500h11.500l1 7.500h-13.500z" fill="#c6c6c6" stroke="#9b9b9b" stroke-width="0.900"/></g></svg>
<svg style="left:189px;top:138px;" width="24" height="24" viewBox="0 0 24 24"><path d="M1.500 10.500l10.500-8.500 10.500 8.500v12h-21z" fill="#f7f7f7" stroke="#9b9b9b" stroke-width="1.100" stroke-linejoin="round"/><rect x="10" y="3" width="4" height="4" fill="#9b9b9b"/><rect x="2" y="10" width="4" height="4" fill="#9b9b9b"/><rect x="18" y="10" width="4" height="4" fill="#9b9b9b"/><rect x="2" y="18" width="4" height="4" fill="#9b9b9b"/><rect x="18" y="18" width="4" height="4" fill="#9b9b9b"/></svg>
<svg style="left:222px;top:138px;" width="24" height="24" viewBox="0 0 24 24"><g transform="translate(0 -1.500) scale(0.850)"><path d="M1.500 10.500l10.500-8.500 10.500 8.500v12h-21z" fill="#f7f7f7" stroke="#9b9b9b" stroke-width="1.100" stroke-linejoin="round"/><rect x="10" y="3" width="4" height="4" fill="#9b9b9b"/><rect x="2" y="10" width="4" height="4" fill="#9b9b9b"/><rect x="18" y="10" width="4" height="4" fill="#9b9b9b"/><rect x="2" y="18" width="4" height="4" fill="#9b9b9b"/><rect x="18" y="18" width="4" height="4" fill="#9b9b9b"/></g><rect x="10" y="10" width="13.500" height="13.500" rx="1" fill="#fff" stroke="#9b9b9b" stroke-width="1.200"/><path d="M12 14.300h9.500M12 19.300h9.500" stroke="#9b9b9b" stroke-width="0.9"/><rect x="17.300" y="12.300" width="2.200" height="4" fill="#fff" stroke="#9b9b9b" stroke-width="0.8"/><rect x="13.800" y="17.300" width="2.200" height="4" fill="#fff" stroke="#9b9b9b" stroke-width="0.8"/></svg>
<svg style="left:255px;top:138px;" width="24" height="24" viewBox="0 0 24 24"><path d="M1.500 21.500l6-18h3v18z" fill="#c6c6c6" stroke="#9b9b9b" stroke-width="1"/><path d="M22.500 21.500l-6-18h-3v18z" fill="#fff" stroke="#9b9b9b" stroke-width="1"/></svg>
<svg style="left:288px;top:138px;" width="24" height="24" viewBox="0 0 24 24"><path d="M3 1l17.500 6v3.500h-17.500z" fill="#c6c6c6" stroke="#9b9b9b" stroke-width="1"/><path d="M3 23l17.500-6v-3.500h-17.500z" fill="#fff" stroke="#9b9b9b" stroke-width="1"/></svg>
<svg style="left:321px;top:138px;" width="24" height="24" viewBox="0 0 24 24"><path d="M2 22.500l17-17" stroke="#9b9b9b" stroke-width="1.600"/><path d="M20.500 3l-1.500 7.500-5.500-5.500z" fill="#9b9b9b"/><path d="M10 2l-7.500 7.500M1.500 4.500v6h6" stroke="#9b9b9b" stroke-width="1.800" fill="none"/></svg>
<svg style="left:354px;top:138px;" width="24" height="24" viewBox="0 0 24 24"><path d="M0.500 3h16v5h-1.800c-0.200-1.600-0.900-2.300-2.300-2.300h-2v12.800c0 1.300 0.500 1.700 2 1.800v1.700h-7.800v-1.700c1.500-0.100 2-0.500 2-1.800v-12.800h-2c-1.400 0-2.100 0.700-2.300 2.300h-1.800z" fill="#c6c6c6" stroke="#9b9b9b" stroke-width="1" stroke-linejoin="round"/><path d="M20 3.500v18M16.500 7l3.500-4 3.500 4M16.500 18l3.500 4 3.500-4" stroke="#9b9b9b" stroke-width="1.300" fill="none"/></svg>
<svg style="left:387px;top:138px;" width="24" height="24" viewBox="0 0 24 24"><rect x="0.500" y="0.500" width="23" height="23" fill="#c6c6c6" stroke="#9b9b9b" stroke-width="1"/><path d="M7.500 0.500l5 11.500-6 11.500M12.500 12h11" stroke="#9b9b9b" stroke-width="1" fill="none"/><rect x="3" y="9.500" width="4" height="4" fill="#7a7a7a"/><rect x="15" y="5" width="4" height="4" fill="#7a7a7a"/><rect x="15" y="16.500" width="4" height="4" fill="#7a7a7a"/></svg>
<svg style="left:420px;top:138px;" width="24" height="24" viewBox="0 0 24 24"><path d="M10.500 2l-8.500 7 4.500 13h13l3.500-13.500-8.500 0.500z" fill="#f6f6f6" stroke="#9b9b9b" stroke-width="1.200" stroke-linejoin="round"/><path d="M6.500 3.500l5-2 -1.500 5zM3.500 18.500l3 4.500 0.500-5z" fill="#9b9b9b"/></svg>
<svg style="left:453px;top:138px;" width="24" height="24" viewBox="0 0 24 24"><path d="M10.500 2.500l-9 7 4 12.500h13.500l3.500-12.500-8 0.500z" fill="#f6f6f6" stroke="#9b9b9b" stroke-width="1.200" stroke-linejoin="round"/><rect x="9" y="1" width="3.600" height="3.600" fill="#fff" stroke="#9b9b9b" stroke-width="0.900"/><rect x="13" y="7.500" width="4" height="4" fill="#7a7a7a"/></svg>
<svg style="left:486px;top:138px;" width="24" height="24" viewBox="0 0 24 24"><path d="M20.500 3.500l-17.500 8.500 17.500 8.500" stroke="#b9b9b9" stroke-width="1.700" fill="none" opacity="0.850"/><path d="M14 7c2 3 2 7 0 10" stroke="#cfcfcf" stroke-width="1.100" fill="none"/></svg>
<svg style="left:519px;top:138px;" width="24" height="24" viewBox="0 0 24 24"><path d="M5.500 21c-4-6-2.500-13.500 0-15.500 5-5.500 12-4 15.500 0" stroke="#9b9b9b" stroke-width="1.300" fill="none"/><rect x="2.500" y="5.500" width="4" height="4" fill="#9b9b9b"/><rect x="19.500" y="5.500" width="4" height="4" fill="#9b9b9b"/><rect x="3.500" y="20" width="4" height="4" fill="#9b9b9b"/></svg>
<svg style="left:552px;top:138px;" width="24" height="24" viewBox="0 0 24 24"><circle cx="12.500" cy="12" r="10" fill="#ececec" stroke="#9b9b9b" stroke-width="1.200"/><rect x="1" y="6" width="4" height="4" fill="#9b9b9b"/><rect x="15" y="0.500" width="4" height="4" fill="#9b9b9b"/><rect x="6.500" y="19.500" width="4" height="4" fill="#9b9b9b"/></svg>
<svg style="left:585px;top:138px;" width="24" height="24" viewBox="0 0 24 24"><path d="M0.500 22h23" stroke="#9b9b9b" stroke-width="2"/><path d="M10.500 1v17" stroke="#9b9b9b" stroke-width="1.600"/><path d="M6.500 17h8l-4 4.500z" fill="#9b9b9b"/><path d="M10.500 11.500h9v10" stroke="#9b9b9b" stroke-width="1.100" fill="none"/></svg>
<svg style="left:618px;top:138px;" width="24" height="24" viewBox="0 0 24 24"><path d="M0.500 22h23" stroke="#9b9b9b" stroke-width="2"/><path d="M10.500 4v18" stroke="#9b9b9b" stroke-width="1.600"/><path d="M6.500 5.500h8l-4-4.500z" fill="#9b9b9b"/><path d="M10.500 11.500h9v10" stroke="#9b9b9b" stroke-width="1.100" fill="none"/></svg>
<svg style="left:651px;top:138px;" width="24" height="24" viewBox="0 0 24 24"><path d="M2 22h22" stroke="#9b9b9b" stroke-width="2"/><path d="M3 22l17-19.500" stroke="#9b9b9b" stroke-width="1.800"/><path d="M12 11.500c2.500 2 4 6 4 10" stroke="#9b9b9b" stroke-width="1.100" fill="none"/><rect x="18" y="0.500" width="4" height="4" fill="#9b9b9b"/><rect x="0.500" y="19.500" width="4.500" height="4.500" fill="#9b9b9b"/></svg>
<svg style="left:4px;top:63px;" width="6" height="18" viewBox="0 0 6 18"><path d="M1.500 0v18M4.500 0v18" stroke="#c4c4c4" stroke-width="1" stroke-dasharray="1 2"/></svg>
<svg style="left:635px;top:63px;" width="6" height="18" viewBox="0 0 6 18"><path d="M1.500 0v18M4.500 0v18" stroke="#c4c4c4" stroke-width="1" stroke-dasharray="1 2"/></svg>
<svg style="left:1153px;top:63px;" width="6" height="18" viewBox="0 0 6 18"><path d="M1.500 0v18M4.500 0v18" stroke="#c4c4c4" stroke-width="1" stroke-dasharray="1 2"/></svg>
<svg style="left:4px;top:102px;" width="6" height="18" viewBox="0 0 6 18"><path d="M1.500 0v18M4.500 0v18" stroke="#c4c4c4" stroke-width="1" stroke-dasharray="1 2"/></svg>
<svg style="left:595px;top:102px;" width="6" height="18" viewBox="0 0 6 18"><path d="M1.500 0v18M4.500 0v18" stroke="#c4c4c4" stroke-width="1" stroke-dasharray="1 2"/></svg>
<svg style="left:743px;top:102px;" width="6" height="18" viewBox="0 0 6 18"><path d="M1.500 0v18M4.500 0v18" stroke="#c4c4c4" stroke-width="1" stroke-dasharray="1 2"/></svg>
<svg style="left:1188px;top:102px;" width="6" height="18" viewBox="0 0 6 18"><path d="M1.500 0v18M4.500 0v18" stroke="#c4c4c4" stroke-width="1" stroke-dasharray="1 2"/></svg>
<svg style="left:4px;top:141px;" width="6" height="18" viewBox="0 0 6 18"><path d="M1.500 0v18M4.500 0v18" stroke="#c4c4c4" stroke-width="1" stroke-dasharray="1 2"/></svg>
<div style="left:214px;top:61px;width:1px;height:22px;background:#cccccc"></div>
<div style="left:320px;top:61px;width:1px;height:22px;background:#cccccc"></div>
<div style="left:426px;top:61px;width:1px;height:22px;background:#cccccc"></div>
<div style="left:1010px;top:61px;width:1px;height:22px;background:#cccccc"></div>
<div style="left:1297px;top:61px;width:1px;height:22px;background:#cccccc"></div>
<div style="left:181px;top:100px;width:1px;height:22px;background:#cccccc"></div>
<div style="left:353px;top:100px;width:1px;height:22px;background:#cccccc"></div>
<div style="left:1266px;top:100px;width:1px;height:22px;background:#cccccc"></div>
<div style="left:1306px;top:100px;width:1px;height:22px;background:#cccccc"></div>
<div style="left:82px;top:139px;width:1px;height:22px;background:#cccccc"></div>
<svg style="left:1353px;top:69px;" width="9" height="7" viewBox="0 0 9 7"><path d="M1 0.500l2.800 2.800-2.800 2.800M5 0.500l2.800 2.800-2.800 2.800" stroke="#3a3a3a" stroke-width="1.100" fill="none"/></svg>
<svg style="left:1353px;top:108px;" width="9" height="7" viewBox="0 0 9 7"><path d="M1 0.500l2.800 2.800-2.800 2.800M5 0.500l2.800 2.800-2.800 2.800" stroke="#3a3a3a" stroke-width="1.100" fill="none"/></svg>
<!-- panels -->
<div style="left:0px;top:170px;width:212px;height:19px;background:#bdd0ea"></div>
<div class="t" style="left:4px;top:170px;font-size:13px;line-height:18px;color:#1e1e1e">Управление слоями</div>
<svg style="left:185px;top:174px;" width="25" height="12" viewBox="0 0 25 12"><rect x="0.500" y="0.500" width="10" height="10" rx="2.500" fill="none" stroke="#7a7269"/><rect x="4.500" y="2.500" width="4" height="4" rx="1.200" fill="none" stroke="#7a7269" stroke-width="0.9"/><rect x="2.500" y="4.500" width="4" height="4" rx="1.200" fill="#c4d6ee" stroke="#7a7269" stroke-width="0.9"/><rect x="14.500" y="0.500" width="10" height="10" rx="2.500" fill="none" stroke="#6f675e"/><path d="M16.800 2.800l5.400 5.400M22.200 2.800l-5.400 5.400" stroke="#5a524a" stroke-width="2"/></svg>
<svg style="left:3px;top:199px;" width="20" height="22" viewBox="0 0 20 22"><path d="M9.500 2v14" stroke="#a9a9a9" stroke-width="3" fill="none"/><path d="M3.800 11l5.700 7 5.700-7" stroke="#a9a9a9" stroke-width="2.800" fill="none"/></svg>
<svg style="left:32px;top:199px;" width="20" height="22" viewBox="0 0 20 22"><path d="M9.500 19v-14" stroke="#a9a9a9" stroke-width="3" fill="none"/><path d="M3.800 10l5.700-7 5.700 7" stroke="#a9a9a9" stroke-width="2.800" fill="none"/></svg>
<svg style="left:63px;top:199px;" width="22" height="22" viewBox="0 0 22 22"><g transform="scale(0.880)"><path d="M2 9.5l8.5-6.5 8.5 6.5-8.5 5z" fill="#fff" stroke="#2f6fb0" stroke-width="1.3" stroke-linejoin="round"/><path d="M2 12l8.500 5M2 14.5l8.500 5" stroke="#4c5a5a" stroke-width="1.1" fill="none"/><path d="M15 12.5v7M11.500 16h7" stroke="#6a9a1f" stroke-width="2.2"/></g></svg>
<svg style="left:93px;top:199px;" width="22" height="22" viewBox="0 0 22 22"><g transform="scale(0.880)"><path d="M2 9.5l8.500-6.500 8.500 6.500-8.500 5z" fill="#f1f1f1" stroke="#a5a5a5" stroke-width="1.2" stroke-linejoin="round"/><path d="M2 12l8.500 5 8.500-5M2 14.500l8.500 5 8.500-5" stroke="#a5a5a5" stroke-width="1.1" fill="none"/><path d="M11.500 2.500l6 6M17.500 2.500l-6 6" stroke="#a5a5a5" stroke-width="1.5"/></g></svg>
<div style="left:0px;top:227px;width:212px;height:281px;background:#fff;border:1px solid #b4b4b4"></div>
<div style="left:1px;top:228px;width:210px;height:16px;background:#b5e3fb"></div>
<div class="t" style="left:12px;top:227.5px;font-size:13px;color:#141414;letter-spacing:-0.32px">Карта: подпадмц…</div>
<svg style="left:133px;top:229.4px;" width="16" height="13" viewBox="0 0 16 13"><path d="M0.500 6.700C3.500 2.300 12.500 2.300 15.500 6.700C12.500 11 3.500 11 0.500 6.700z" fill="#f4f4f4" stroke="#7a7a7a" stroke-width="1"/><circle cx="8" cy="6.700" r="3.700" fill="#3b86d8"/><circle cx="8" cy="6.700" r="1.700" fill="#1c3f6e"/><circle cx="6.900" cy="5.600" r="0.800" fill="#cfe6fb"/><path d="M0.500 6C3.500 1.300 12.500 1.300 15.500 6" fill="none" stroke="#5a5a5a" stroke-width="1.400"/></svg>
<svg style="left:154px;top:228.5px;" width="14" height="14" viewBox="0 0 14 14"><rect x="0.500" y="0.500" width="13" height="13" fill="#cfe6fb" stroke="#2f6fb0" stroke-width="1" stroke-dasharray="3 2"/></svg>
<svg style="left:193px;top:228.2px;" width="16" height="16" viewBox="0 0 16 16"><path d="M1 10.2l8.4-8.3 5 0 0.1 5-8.4 8.3z" fill="#e6e6e6" stroke="#9a9a9a" stroke-width="1" stroke-linejoin="round"/><circle cx="12" cy="4.3" r="1" fill="#fff" stroke="#9a9a9a" stroke-width="0.7"/><path d="M4.2 9.6l4.6-4.6 2.6 2.6-4.6 4.6z" fill="#c4c4c4" stroke="#a5a5a5" stroke-width="0.6"/></svg>
<div class="t" style="left:42px;top:245px;font-size:13px;color:#141414;letter-spacing:-0.05px">Косметичес…</div>
<svg style="left:20px;top:245px;" width="17" height="17" viewBox="0 0 17 17"><path d="M0.400 6.200l7.400-5.700 7.700 5.700-7.700 4.800z" fill="#f7c948" stroke="#d39a1c" stroke-width="0.9" stroke-linejoin="round"/><path d="M0.300 8.400l5 3.200M0.300 10.600l5 3.200" stroke="#4c5a5a" stroke-width="0.9" fill="none"/><rect x="6.500" y="6" width="8.300" height="8.500" fill="#cfe6fb" stroke="#2f6fb0" stroke-width="1.100"/><rect x="5.100" y="4.600" width="2.800" height="2.800" fill="#3a4646"/><rect x="13.400" y="4.600" width="2.800" height="2.800" fill="#3a4646"/><rect x="5.100" y="13.100" width="2.800" height="2.800" fill="#3a4646"/><rect x="13.400" y="13.100" width="2.800" height="2.800" fill="#3a4646"/></svg>
<svg style="left:133px;top:247.4px;" width="16" height="13" viewBox="0 0 16 13"><path d="M0.500 6.700C3.500 2.300 12.500 2.300 15.500 6.700C12.500 11 3.500 11 0.500 6.700z" fill="#f4f4f4" stroke="#7a7a7a" stroke-width="1"/><circle cx="8" cy="6.700" r="3.700" fill="#3b86d8"/><circle cx="8" cy="6.700" r="1.700" fill="#1c3f6e"/><circle cx="6.900" cy="5.600" r="0.800" fill="#cfe6fb"/><path d="M0.500 6C3.500 1.300 12.500 1.300 15.500 6" fill="none" stroke="#5a5a5a" stroke-width="1.400"/></svg>
<svg style="left:154px;top:246.5px;" width="14" height="14" viewBox="0 0 14 14"><rect x="0.500" y="0.500" width="13" height="13" fill="#cfe6fb" stroke="#2f6fb0" stroke-width="1" stroke-dasharray="3 2"/></svg>
<svg style="left:174px;top:246.5px;" width="15" height="16" viewBox="0 0 15 16"><path d="M1.2 14.8l1.2-3.6 9-9 2.4 2.4-9 9z" fill="#c9c9c9" stroke="#8e8e8e" stroke-width="0.9" stroke-linejoin="round"/><path d="M10.2 3.4l2.4 2.4" stroke="#8e8e8e" stroke-width="0.9"/><path d="M1.2 14.8l0.5-1.6 1.1 1.1z" fill="#777"/></svg>
<div class="t" style="left:42px;top:263px;font-size:13px;color:#141414;letter-spacing:-0.05px">подпадмце…</div>
<svg style="left:20px;top:263px;" width="17" height="17" viewBox="0 0 17 17"><path d="M0.400 6.200l7.400-5.700 7.700 5.700-7.700 4.800z" fill="#ffffff" stroke="#4c5a5a" stroke-width="0.9" stroke-linejoin="round"/><path d="M0.300 8.400l5 3.200M0.300 10.600l5 3.200" stroke="#4c5a5a" stroke-width="0.9" fill="none"/><rect x="6.500" y="6" width="8.300" height="8.500" fill="#cfe6fb" stroke="#2f6fb0" stroke-width="1.100"/><rect x="5.100" y="4.600" width="2.800" height="2.800" fill="#3a4646"/><rect x="13.400" y="4.600" width="2.800" height="2.800" fill="#3a4646"/><rect x="5.100" y="13.100" width="2.800" height="2.800" fill="#3a4646"/><rect x="13.400" y="13.100" width="2.800" height="2.800" fill="#3a4646"/></svg>
<svg style="left:133px;top:265.4px;" width="16" height="13" viewBox="0 0 16 13"><path d="M0.500 6.700C3.500 2.300 12.500 2.300 15.500 6.700C12.500 11 3.500 11 0.500 6.700z" fill="#f4f4f4" stroke="#7a7a7a" stroke-width="1"/><circle cx="8" cy="6.700" r="3.700" fill="#3b86d8"/><circle cx="8" cy="6.700" r="1.700" fill="#1c3f6e"/><circle cx="6.900" cy="5.600" r="0.800" fill="#cfe6fb"/><path d="M0.500 6C3.500 1.300 12.500 1.300 15.500 6" fill="none" stroke="#5a5a5a" stroke-width="1.400"/></svg>
<svg style="left:154px;top:264.5px;" width="14" height="14" viewBox="0 0 14 14"><rect x="0.500" y="0.500" width="13" height="13" fill="#cfe6fb" stroke="#2f6fb0" stroke-width="1" stroke-dasharray="3 2"/></svg>
<svg style="left:174px;top:264.5px;" width="15" height="16" viewBox="0 0 15 16"><path d="M1.2 14.8l1.2-3.6 9-9 2.4 2.4-9 9z" fill="#c9c9c9" stroke="#8e8e8e" stroke-width="0.9" stroke-linejoin="round"/><path d="M10.2 3.4l2.4 2.4" stroke="#8e8e8e" stroke-width="0.9"/><path d="M1.2 14.8l0.5-1.6 1.1 1.1z" fill="#777"/></svg>
<svg style="left:193px;top:264.2px;" width="16" height="16" viewBox="0 0 16 16"><path d="M1 10.2l8.4-8.3 5 0 0.1 5-8.4 8.3z" fill="#e6e6e6" stroke="#9a9a9a" stroke-width="1" stroke-linejoin="round"/><circle cx="12" cy="4.3" r="1" fill="#fff" stroke="#9a9a9a" stroke-width="0.7"/><path d="M4.2 9.6l4.6-4.6 2.6 2.6-4.6 4.6z" fill="#c4c4c4" stroke="#a5a5a5" stroke-width="0.6"/></svg>
<div class="t" style="left:42px;top:281px;font-size:13px;color:#141414;letter-spacing:-0.05px">область</div>
<svg style="left:20px;top:281px;" width="17" height="17" viewBox="0 0 17 17"><path d="M0.400 6.200l7.400-5.700 7.700 5.700-7.700 4.800z" fill="#ffffff" stroke="#4c5a5a" stroke-width="0.9" stroke-linejoin="round"/><path d="M0.300 8.400l5 3.200M0.300 10.600l5 3.200" stroke="#4c5a5a" stroke-width="0.9" fill="none"/><rect x="6.500" y="6" width="8.300" height="8.500" fill="#cfe6fb" stroke="#2f6fb0" stroke-width="1.100"/><rect x="5.100" y="4.600" width="2.800" height="2.800" fill="#3a4646"/><rect x="13.400" y="4.600" width="2.800" height="2.800" fill="#3a4646"/><rect x="5.100" y="13.100" width="2.800" height="2.800" fill="#3a4646"/><rect x="13.400" y="13.100" width="2.800" height="2.800" fill="#3a4646"/></svg>
<svg style="left:133px;top:283.4px;" width="16" height="13" viewBox="0 0 16 13"><path d="M0.500 6.700C3.500 2.300 12.500 2.300 15.500 6.700C12.500 11 3.500 11 0.500 6.700z" fill="#f4f4f4" stroke="#7a7a7a" stroke-width="1"/><circle cx="8" cy="6.700" r="3.700" fill="#3b86d8"/><circle cx="8" cy="6.700" r="1.700" fill="#1c3f6e"/><circle cx="6.900" cy="5.600" r="0.800" fill="#cfe6fb"/><path d="M0.500 6C3.500 1.300 12.500 1.300 15.500 6" fill="none" stroke="#5a5a5a" stroke-width="1.400"/></svg>
<svg style="left:154px;top:282.5px;" width="14" height="14" viewBox="0 0 14 14"><rect x="0.500" y="0.500" width="13" height="13" fill="#cfe6fb" stroke="#2f6fb0" stroke-width="1" stroke-dasharray="3 2"/></svg>
<svg style="left:174px;top:282.5px;" width="15" height="16" viewBox="0 0 15 16"><path d="M1.2 14.8l1.2-3.6 9-9 2.4 2.4-9 9z" fill="#c9c9c9" stroke="#8e8e8e" stroke-width="0.9" stroke-linejoin="round"/><path d="M10.2 3.4l2.4 2.4" stroke="#8e8e8e" stroke-width="0.9"/><path d="M1.2 14.8l0.5-1.6 1.1 1.1z" fill="#777"/></svg>
<svg style="left:193px;top:282.2px;" width="16" height="16" viewBox="0 0 16 16"><path d="M1 10.2l8.4-8.3 5 0 0.1 5-8.4 8.3z" fill="#e6e6e6" stroke="#9a9a9a" stroke-width="1" stroke-linejoin="round"/><circle cx="12" cy="4.3" r="1" fill="#fff" stroke="#9a9a9a" stroke-width="0.7"/><path d="M4.2 9.6l4.6-4.6 2.6 2.6-4.6 4.6z" fill="#c4c4c4" stroke="#a5a5a5" stroke-width="0.6"/></svg>
<div class="t" style="left:42px;top:299px;font-size:13px;color:#141414;letter-spacing:-0.05px">Админцентр</div>
<svg style="left:20px;top:299px;" width="17" height="17" viewBox="0 0 17 17"><path d="M0.400 6.200l7.400-5.700 7.700 5.700-7.700 4.800z" fill="#ffffff" stroke="#4c5a5a" stroke-width="0.9" stroke-linejoin="round"/><path d="M0.300 8.400l5 3.200M0.300 10.600l5 3.200" stroke="#4c5a5a" stroke-width="0.9" fill="none"/><rect x="6.500" y="6" width="8.300" height="8.500" fill="#cfe6fb" stroke="#2f6fb0" stroke-width="1.100"/><rect x="5.100" y="4.600" width="2.800" height="2.800" fill="#3a4646"/><rect x="13.400" y="4.600" width="2.800" height="2.800" fill="#3a4646"/><rect x="5.100" y="13.100" width="2.800" height="2.800" fill="#3a4646"/><rect x="13.400" y="13.100" width="2.800" height="2.800" fill="#3a4646"/></svg>
<svg style="left:133px;top:301.4px;" width="16" height="13" viewBox="0 0 16 13"><path d="M0.500 6.700C3.500 2.300 12.500 2.300 15.500 6.700C12.500 11 3.500 11 0.500 6.700z" fill="#f4f4f4" stroke="#7a7a7a" stroke-width="1"/><circle cx="8" cy="6.700" r="3.700" fill="#3b86d8"/><circle cx="8" cy="6.700" r="1.700" fill="#1c3f6e"/><circle cx="6.900" cy="5.600" r="0.800" fill="#cfe6fb"/><path d="M0.500 6C3.500 1.300 12.500 1.300 15.500 6" fill="none" stroke="#5a5a5a" stroke-width="1.400"/></svg>
<svg style="left:154px;top:300.5px;" width="14" height="14" viewBox="0 0 14 14"><rect x="0.500" y="0.500" width="13" height="13" fill="#cfe6fb" stroke="#2f6fb0" stroke-width="1" stroke-dasharray="3 2"/></svg>
<svg style="left:174px;top:300.5px;" width="15" height="16" viewBox="0 0 15 16"><path d="M1.2 14.8l1.2-3.6 9-9 2.4 2.4-9 9z" fill="#c9c9c9" stroke="#8e8e8e" stroke-width="0.9" stroke-linejoin="round"/><path d="M10.2 3.4l2.4 2.4" stroke="#8e8e8e" stroke-width="0.9"/><path d="M1.2 14.8l0.5-1.6 1.1 1.1z" fill="#777"/></svg>
<svg style="left:193px;top:300.2px;" width="16" height="16" viewBox="0 0 16 16"><path d="M1 10.2l8.4-8.3 5 0 0.1 5-8.4 8.3z" fill="#e6e6e6" stroke="#9a9a9a" stroke-width="1" stroke-linejoin="round"/><circle cx="12" cy="4.3" r="1" fill="#fff" stroke="#9a9a9a" stroke-width="0.7"/><path d="M4.2 9.6l4.6-4.6 2.6 2.6-4.6 4.6z" fill="#c4c4c4" stroke="#a5a5a5" stroke-width="0.6"/></svg>
<div class="t" style="left:42px;top:317px;font-size:13px;color:#141414;letter-spacing:-0.05px">подпгидр</div>
<svg style="left:20px;top:317px;" width="17" height="17" viewBox="0 0 17 17"><path d="M0.400 6.200l7.400-5.700 7.700 5.700-7.700 4.800z" fill="#ffffff" stroke="#4c5a5a" stroke-width="0.9" stroke-linejoin="round"/><path d="M0.300 8.400l5 3.200M0.300 10.600l5 3.200" stroke="#4c5a5a" stroke-width="0.9" fill="none"/><rect x="6.500" y="6" width="8.300" height="8.500" fill="#cfe6fb" stroke="#2f6fb0" stroke-width="1.100"/><rect x="5.100" y="4.600" width="2.800" height="2.800" fill="#3a4646"/><rect x="13.400" y="4.600" width="2.800" height="2.800" fill="#3a4646"/><rect x="5.100" y="13.100" width="2.800" height="2.800" fill="#3a4646"/><rect x="13.400" y="13.100" width="2.800" height="2.800" fill="#3a4646"/></svg>
<svg style="left:133px;top:319.4px;" width="16" height="13" viewBox="0 0 16 13"><path d="M0.500 6.700C3.500 2.300 12.500 2.300 15.500 6.700C12.500 11 3.500 11 0.500 6.700z" fill="#f4f4f4" stroke="#7a7a7a" stroke-width="1"/><circle cx="8" cy="6.700" r="3.700" fill="#3b86d8"/><circle cx="8" cy="6.700" r="1.700" fill="#1c3f6e"/><circle cx="6.900" cy="5.600" r="0.800" fill="#cfe6fb"/><path d="M0.500 6C3.500 1.300 12.500 1.300 15.500 6" fill="none" stroke="#5a5a5a" stroke-width="1.400"/></svg>
<svg style="left:154px;top:318.5px;" width="14" height="14" viewBox="0 0 14 14"><rect x="0.500" y="0.500" width="13" height="13" fill="#cfe6fb" stroke="#2f6fb0" stroke-width="1" stroke-dasharray="3 2"/></svg>
<svg style="left:174px;top:318.5px;" width="15" height="16" viewBox="0 0 15 16"><path d="M1.2 14.8l1.2-3.6 9-9 2.4 2.4-9 9z" fill="#c9c9c9" stroke="#8e8e8e" stroke-width="0.9" stroke-linejoin="round"/><path d="M10.2 3.4l2.4 2.4" stroke="#8e8e8e" stroke-width="0.9"/><path d="M1.2 14.8l0.5-1.6 1.1 1.1z" fill="#777"/></svg>
<svg style="left:193px;top:318.2px;" width="16" height="16" viewBox="0 0 16 16"><path d="M1 10.2l8.4-8.3 5 0 0.1 5-8.4 8.3z" fill="#e6e6e6" stroke="#9a9a9a" stroke-width="1" stroke-linejoin="round"/><circle cx="12" cy="4.3" r="1" fill="#fff" stroke="#9a9a9a" stroke-width="0.7"/><path d="M4.2 9.6l4.6-4.6 2.6 2.6-4.6 4.6z" fill="#c4c4c4" stroke="#a5a5a5" stroke-width="0.6"/></svg>
<div class="t" style="left:42px;top:335px;font-size:13px;color:#141414;letter-spacing:-0.05px">гидрография</div>
<svg style="left:20px;top:335px;" width="17" height="17" viewBox="0 0 17 17"><path d="M0.400 6.200l7.400-5.700 7.700 5.700-7.700 4.800z" fill="#ffffff" stroke="#4c5a5a" stroke-width="0.9" stroke-linejoin="round"/><path d="M0.300 8.400l5 3.200M0.300 10.600l5 3.200" stroke="#4c5a5a" stroke-width="0.9" fill="none"/><rect x="6.500" y="6" width="8.300" height="8.500" fill="#cfe6fb" stroke="#2f6fb0" stroke-width="1.100"/><rect x="5.100" y="4.600" width="2.800" height="2.800" fill="#3a4646"/><rect x="13.400" y="4.600" width="2.800" height="2.800" fill="#3a4646"/><rect x="5.100" y="13.100" width="2.800" height="2.800" fill="#3a4646"/><rect x="13.400" y="13.100" width="2.800" height="2.800" fill="#3a4646"/></svg>
<svg style="left:133px;top:337.4px;" width="16" height="13" viewBox="0 0 16 13"><path d="M0.500 6.700C3.500 2.300 12.500 2.300 15.500 6.700C12.500 11 3.500 11 0.500 6.700z" fill="#f4f4f4" stroke="#7a7a7a" stroke-width="1"/><circle cx="8" cy="6.700" r="3.700" fill="#3b86d8"/><circle cx="8" cy="6.700" r="1.700" fill="#1c3f6e"/><circle cx="6.900" cy="5.600" r="0.800" fill="#cfe6fb"/><path d="M0.500 6C3.500 1.300 12.500 1.300 15.500 6" fill="none" stroke="#5a5a5a" stroke-width="1.400"/></svg>
<svg style="left:154px;top:336.5px;" width="14" height="14" viewBox="0 0 14 14"><rect x="0.500" y="0.500" width="13" height="13" fill="#cfe6fb" stroke="#2f6fb0" stroke-width="1" stroke-dasharray="3 2"/></svg>
<svg style="left:174px;top:336.5px;" width="15" height="16" viewBox="0 0 15 16"><path d="M1.2 14.8l1.2-3.6 9-9 2.4 2.4-9 9z" fill="#c9c9c9" stroke="#8e8e8e" stroke-width="0.9" stroke-linejoin="round"/><path d="M10.2 3.4l2.4 2.4" stroke="#8e8e8e" stroke-width="0.9"/><path d="M1.2 14.8l0.5-1.6 1.1 1.1z" fill="#777"/></svg>
<svg style="left:193px;top:336.2px;" width="16" height="16" viewBox="0 0 16 16"><path d="M1 10.2l8.4-8.3 5 0 0.1 5-8.4 8.3z" fill="#e6e6e6" stroke="#9a9a9a" stroke-width="1" stroke-linejoin="round"/><circle cx="12" cy="4.3" r="1" fill="#fff" stroke="#9a9a9a" stroke-width="0.7"/><path d="M4.2 9.6l4.6-4.6 2.6 2.6-4.6 4.6z" fill="#c4c4c4" stroke="#a5a5a5" stroke-width="0.6"/></svg>
<div class="t" style="left:42px;top:353px;font-size:13px;color:#141414;letter-spacing:-0.05px">Демографи…</div>
<svg style="left:20px;top:353px;" width="17" height="17" viewBox="0 0 17 17"><path d="M0.400 6.200l7.400-5.700 7.700 5.700-7.700 4.800z" fill="#ffffff" stroke="#4c5a5a" stroke-width="0.9" stroke-linejoin="round"/><path d="M0.300 8.400l5 3.200M0.300 10.600l5 3.200" stroke="#4c5a5a" stroke-width="0.9" fill="none"/><rect x="6.500" y="6" width="8.300" height="8.500" fill="#cfe6fb" stroke="#2f6fb0" stroke-width="1.100"/><rect x="5.100" y="4.600" width="2.800" height="2.800" fill="#3a4646"/><rect x="13.400" y="4.600" width="2.800" height="2.800" fill="#3a4646"/><rect x="5.100" y="13.100" width="2.800" height="2.800" fill="#3a4646"/><rect x="13.400" y="13.100" width="2.800" height="2.800" fill="#3a4646"/></svg>
<svg style="left:133px;top:355.4px;" width="16" height="13" viewBox="0 0 16 13"><path d="M0.500 6.700C3.500 2.300 12.500 2.300 15.500 6.700C12.500 11 3.500 11 0.500 6.700z" fill="#f4f4f4" stroke="#7a7a7a" stroke-width="1"/><circle cx="8" cy="6.700" r="3.700" fill="#3b86d8"/><circle cx="8" cy="6.700" r="1.700" fill="#1c3f6e"/><circle cx="6.900" cy="5.600" r="0.800" fill="#cfe6fb"/><path d="M0.500 6C3.500 1.300 12.500 1.300 15.500 6" fill="none" stroke="#5a5a5a" stroke-width="1.400"/></svg>
<svg style="left:154px;top:354.5px;" width="14" height="14" viewBox="0 0 14 14"><rect x="0.500" y="0.500" width="13" height="13" fill="#cfe6fb" stroke="#2f6fb0" stroke-width="1" stroke-dasharray="3 2"/></svg>
<svg style="left:174px;top:354.5px;" width="15" height="16" viewBox="0 0 15 16"><path d="M1.2 14.8l1.2-3.6 9-9 2.4 2.4-9 9z" fill="#c9c9c9" stroke="#8e8e8e" stroke-width="0.9" stroke-linejoin="round"/><path d="M10.2 3.4l2.4 2.4" stroke="#8e8e8e" stroke-width="0.9"/><path d="M1.2 14.8l0.5-1.6 1.1 1.1z" fill="#777"/></svg>
<svg style="left:193px;top:354.2px;" width="16" height="16" viewBox="0 0 16 16"><path d="M1 10.2l8.4-8.3 5 0 0.1 5-8.4 8.3z" fill="#e6e6e6" stroke="#9a9a9a" stroke-width="1" stroke-linejoin="round"/><circle cx="12" cy="4.3" r="1" fill="#fff" stroke="#9a9a9a" stroke-width="0.7"/><path d="M4.2 9.6l4.6-4.6 2.6 2.6-4.6 4.6z" fill="#c4c4c4" stroke="#a5a5a5" stroke-width="0.6"/></svg>
<svg style="left:1.5px;top:233.5px;" width="8" height="6" viewBox="0 0 8 6"><path d="M0 0.500h7l-3.500 4.500z" fill="#4a4a4a"/></svg>
<svg style="left:10px;top:358px;" width="6" height="8" viewBox="0 0 6 8"><path d="M0.500 0v7l4.300-3.500z" fill="#4a4a4a"/></svg>
<div style="left:0px;top:523px;width:212px;height:19px;background:#bdd0ea"></div>
<div class="t" style="left:4px;top:523px;font-size:13px;line-height:18px;color:#1e1e1e">Окна</div>
<svg style="left:185px;top:527px;" width="25" height="12" viewBox="0 0 25 12"><rect x="0.500" y="0.500" width="10" height="10" rx="2.500" fill="none" stroke="#7a7269"/><rect x="4.500" y="2.500" width="4" height="4" rx="1.200" fill="none" stroke="#7a7269" stroke-width="0.9"/><rect x="2.500" y="4.500" width="4" height="4" rx="1.200" fill="#c4d6ee" stroke="#7a7269" stroke-width="0.9"/><rect x="14.500" y="0.500" width="10" height="10" rx="2.500" fill="none" stroke="#6f675e"/><path d="M16.800 2.800l5.400 5.400M22.200 2.800l-5.400 5.400" stroke="#5a524a" stroke-width="2"/></svg>
<div style="left:9px;top:551px;width:164px;height:24px;background:#fff;border:1px solid #b8b8b8;border-radius:3px"></div>
<div class="t" style="left:13px;top:554px;font-size:13px;color:#a8a8a8">Фильтр</div>
<div style="left:179px;top:551px;width:24px;height:24px;background:linear-gradient(#fdfdfd,#ececec);border:1px solid #b8b8b8;border-radius:3px"></div>
<div class="t" style="left:183px;top:552px;font-family:&quot;Liberation Serif&quot;,serif;font-weight:bold;font-size:10px;line-height:11px;color:#d23a2a">A</div>
<div class="t" style="left:183px;top:561px;font-family:&quot;Liberation Serif&quot;,serif;font-weight:bold;font-size:10px;line-height:11px;color:#2d3b3b">B</div>
<svg style="left:191px;top:554px;" width="10" height="18" viewBox="0 0 10 18"><path d="M5 0.500v14M1.500 11l3.500 4.500 3.500-4.500" stroke="#2d3b3b" stroke-width="1.6" fill="none"/></svg>
<div style="left:9px;top:581px;width:194px;height:109px;background:#fff;border:1px solid #b4b4b4"></div>
<div class="clip" style="left:10px;top:582px;width:192px;height:94px;"><div class="t" style="left:25px;top:1px;font-size:13px;color:#141414;letter-spacing:-0.200px;">Карта: подпадмцентр,область,Админцентр</div><svg style="left:3px;top:2px;" width="16" height="16" viewBox="0 0 16 16"><rect x="0.5" y="0.5" width="15" height="15" rx="1.5" fill="#e4dcd2" stroke="#4c5a5a"/><path d="M1 1h14v9C12 9 9 6 6 4.5 4 3.5 2.5 2 1 1z" fill="#8cc63f"/><path d="M8 1h7v5C13.5 5 12.5 3 10.5 2.5z" fill="#62a8e8"/><path d="M1 14l5.5-5.5M1.5 2.5C5 6 9 10 15 11" stroke="#f5a623" stroke-width="1.3" fill="none"/></svg><div class="t" style="left:25px;top:19px;font-size:13px;color:#141414;letter-spacing:-0.200px;">Список: Демография_Рождаемость</div><svg style="left:3px;top:20px;" width="16" height="16" viewBox="0 0 16 16"><rect x="0.500" y="0.500" width="15" height="15" rx="1" fill="#fff" stroke="#4c5a5a"/><rect x="0.500" y="0.500" width="15" height="4.500" fill="#58a6f0" stroke="#2264ad" stroke-width="1"/><path d="M3 2.800h3.500M8 2.800h5" stroke="#a9d2f8" stroke-width="1"/><path d="M3 7.5h3M7.5 7.5h5.5M3 10h3M7.5 10h5.5M3 12.5h3M7.5 12.5h5.5" stroke="#9aa0a0" stroke-width="1"/></svg><div class="t" style="left:25px;top:37px;font-size:13px;color:#141414;letter-spacing:-0.200px;">Список: Динамика_рождаемости</div><svg style="left:3px;top:38px;" width="16" height="16" viewBox="0 0 16 16"><rect x="0.500" y="0.500" width="15" height="15" rx="1" fill="#fff" stroke="#4c5a5a"/><rect x="0.500" y="0.500" width="15" height="4.500" fill="#58a6f0" stroke="#2264ad" stroke-width="1"/><path d="M3 2.800h3.500M8 2.800h5" stroke="#a9d2f8" stroke-width="1"/><path d="M3 7.5h3M7.5 7.5h5.5M3 10h3M7.5 10h5.5M3 12.5h3M7.5 12.5h5.5" stroke="#9aa0a0" stroke-width="1"/></svg><div class="t" style="left:25px;top:55px;font-size:13px;color:#141414;letter-spacing:-0.200px;">Список: Для_карт_за_2023_ряд_данных_02</div><svg style="left:3px;top:56px;" width="16" height="16" viewBox="0 0 16 16"><rect x="0.500" y="0.500" width="15" height="15" rx="1" fill="#fff" stroke="#4c5a5a"/><rect x="0.500" y="0.500" width="15" height="4.500" fill="#58a6f0" stroke="#2264ad" stroke-width="1"/><path d="M3 2.800h3.500M8 2.800h5" stroke="#a9d2f8" stroke-width="1"/><path d="M3 7.5h3M7.5 7.5h5.5M3 10h3M7.5 10h5.5M3 12.5h3M7.5 12.5h5.5" stroke="#9aa0a0" stroke-width="1"/></svg><div class="t" style="left:25px;top:73px;font-size:13px;color:#141414;letter-spacing:-0.200px;font-weight:bold;letter-spacing:-0.450px;">Отчет: Новый</div><svg style="left:4px;top:74px;" width="14" height="16" viewBox="0 0 14 16"><rect x="0.5" y="0.5" width="13" height="15" rx="1" fill="#fff" stroke="#4c5a5a"/><rect x="0" y="0" width="2.6" height="16" fill="#3b86d8"/><path d="M5 3.5h6M5 13h6" stroke="#b5b5b5" stroke-width="0.8"/><rect x="5" y="5.5" width="6.5" height="5" fill="#f5a623" stroke="#9aa0a0" stroke-width="0.6"/><path d="M5.5 6.5l5.5 3M5.5 9.8l3-1.6" stroke="#fff" stroke-width="0.9"/></svg></div>
<div style="left:10px;top:676px;width:192px;height:13px;background:#e4e4e4;border-top:1px solid #c4c4c4"></div>
<div style="left:23px;top:677px;width:54px;height:12px;background:linear-gradient(#ffffff,#f2f2f2);border-left:1px solid #c0c0c0;border-right:1px solid #c0c0c0"></div>
<div style="left:10px;top:677px;width:13px;height:12px;background:#f6f6f6"></div>
<div style="left:189px;top:677px;width:13px;height:12px;background:#f6f6f6;border-left:1px solid #c0c0c0"></div>
<svg style="left:14px;top:679px;" width="6" height="8" viewBox="0 0 6 8"><path d="M5 0l-5 4 5 4z" fill="#4a4a4a"/></svg>
<svg style="left:193px;top:679px;" width="6" height="8" viewBox="0 0 6 8"><path d="M0 0l5 4-5 4z" fill="#4a4a4a"/></svg>
<div style="left:1149px;top:170px;width:217px;height:19px;background:#bdd0ea"></div>
<div class="t" style="left:1153px;top:170px;font-size:13px;line-height:18px;color:#1e1e1e">Условные обозначения</div>
<svg style="left:1339px;top:174px;" width="25" height="12" viewBox="0 0 25 12"><rect x="0.500" y="0.500" width="10" height="10" rx="2.500" fill="none" stroke="#7a7269"/><rect x="4.500" y="2.500" width="4" height="4" rx="1.200" fill="none" stroke="#7a7269" stroke-width="0.9"/><rect x="2.500" y="4.500" width="4" height="4" rx="1.200" fill="#c4d6ee" stroke="#7a7269" stroke-width="0.9"/><rect x="14.500" y="0.500" width="10" height="10" rx="2.500" fill="none" stroke="#6f675e"/><path d="M16.800 2.800l5.400 5.400M22.200 2.800l-5.400 5.400" stroke="#5a524a" stroke-width="2"/></svg>
<svg style="left:1162px;top:199px;" width="18" height="20" viewBox="0 0 18 20"><path d="M1 5.500C4 0.500 14 0.500 17 5.500C14 9.500 4 9.500 1 5.500z" fill="#f0f0f0" stroke="#6b6b6b" stroke-width="1.1"/><circle cx="9.500" cy="5.600" r="2.800" fill="#3b86d8"/><path d="M4.500 9.500h9.500l-3.600 4v5h-2.300v-5z" fill="#3b86d8" stroke="#2f6fb0" stroke-width="0.6"/><ellipse cx="9.250" cy="9.500" rx="4.800" ry="1.400" fill="#fff" stroke="#6b6b6b" stroke-width="0.8"/></svg>
<div style="left:1188px;top:198px;width:1px;height:22px;background:#c4c4c4"></div>
<svg style="left:1200px;top:201px;" width="17" height="15" viewBox="0 0 17 15"><path d="M1 14v-12.500h5l1.500 2h6v3M1 14l3-7.500h12l-3 7.500z" fill="#e4e4e4" stroke="#a5a5a5" stroke-width="1" stroke-linejoin="round"/></svg>
<svg style="left:1230px;top:201px;" width="15" height="15" viewBox="0 0 15 15"><path d="M1 14v-12.500h5l1.500 2h6.500v10.500z" fill="#ededed" stroke="#a5a5a5" stroke-width="1" stroke-linejoin="round"/></svg>
<div style="left:1158px;top:227px;width:199px;height:463px;background:#fff;border:1px solid #b4b4b4"></div>
<!-- mdi -->
<div style="left:218px;top:170px;width:911px;height:515px;background:#b0c4de;overflow:hidden"><div style="left:14px;top:13px;width:468px;height:496px;background:#f3f3f3;border:1px solid #9a9a9a;border-radius:7px 7px 0 0"></div><div style="left:15px;top:14px;width:466px;height:22.5px;background:linear-gradient(#ffffff 0%,#f6f6f6 46%,#e9e9e9 54%,#e3e3e3 100%);border-radius:6px 6px 0 0"></div><div style="left:15px;top:36px;width:466px;height:1px;background:#9a9a9a"></div><svg style="left:20px;top:17px;" width="16" height="16" viewBox="0 0 16 16"><rect x="0.500" y="0.500" width="15" height="15" rx="1" fill="#fff" stroke="#4c5a5a"/><rect x="0.500" y="0.500" width="15" height="4.500" fill="#58a6f0" stroke="#2264ad" stroke-width="1"/><path d="M3 2.800h3.500M8 2.800h5" stroke="#a9d2f8" stroke-width="1"/><path d="M3 7.5h3M7.5 7.5h5.5M3 10h3M7.5 10h5.5M3 12.5h3M7.5 12.5h5.5" stroke="#9aa0a0" stroke-width="1"/></svg><div style="left:418px;top:16px;width:17.7px;height:18px;background:linear-gradient(#ffffff 0%,#f7f7f7 48%,#eaeaea 52%,#ededed 100%);border:1px solid #a3a3a3;border-radius:4.500px"></div><svg style="left:418px;top:16px;" width="18" height="18" viewBox="0 0 18 18"><path d="M5 12h8" stroke="#000" stroke-width="2.200"/></svg><div style="left:438px;top:16px;width:17.7px;height:18px;background:linear-gradient(#ffffff 0%,#f7f7f7 48%,#eaeaea 52%,#ededed 100%);border:1px solid #a3a3a3;border-radius:4.500px"></div><svg style="left:438px;top:16px;" width="18" height="18" viewBox="0 0 18 18"><rect x="5.200" y="5.600" width="7.600" height="7.200" fill="none" stroke="#000" stroke-width="1.300"/><path d="M4.550 5.600h8.900" stroke="#000" stroke-width="2.200"/></svg><div style="left:458px;top:16px;width:17.7px;height:18px;background:linear-gradient(#ffffff 0%,#f7f7f7 48%,#eaeaea 52%,#ededed 100%);border:1px solid #a3a3a3;border-radius:4.500px"></div><svg style="left:458px;top:16px;" width="18" height="18" viewBox="0 0 18 18"><path d="M5.300 5.200l7.400 7.400M12.700 5.200l-7.400 7.400" stroke="#000" stroke-width="2.500"/></svg><div style="left:18px;top:36.5px;width:21px;height:468px;border:1px solid #a8a8a8;border-right:none;background:#fff"></div><div style="left:19px;top:37px;width:20px;height:1px;background:#fbfbfb"></div><div style="left:19px;top:38px;width:20px;height:466px;background:repeating-linear-gradient(#fbfbfb 0px,#e5e5e5 19px,#b8b8b8 19px,#b8b8b8 20px);border-right:1px solid #b8b8b8"></div><div style="left:39px;top:38px;width:438px;height:466px;background:repeating-linear-gradient(#fff 0px,#fff 19px,#cdcdcd 19px,#cdcdcd 20px)"></div><div class="t" style="left:60.5px;top:439px;font-size:13.400px;color:#141414">20</div><div class="t" style="left:60.5px;top:459px;font-size:13.400px;color:#141414">21</div><div class="t" style="left:60.5px;top:479px;font-size:13.400px;color:#141414">22</div><div style="left:18px;top:504px;width:460px;height:2px;background:#f3f3f3;border-top:1px solid #a8a8a8"></div><div style="left:644px;top:9px;width:258px;height:320px;background:#f3f3f3;border:1px solid #9a9a9a;border-radius:7px 7px 0 0"></div><div style="left:645px;top:10px;width:256px;height:22.5px;background:linear-gradient(#ffffff 0%,#f6f6f6 46%,#e9e9e9 54%,#e3e3e3 100%);border-radius:6px 6px 0 0"></div><div style="left:645px;top:32px;width:256px;height:1px;background:#9a9a9a"></div><svg style="left:650px;top:13px;" width="16" height="16" viewBox="0 0 16 16"><rect x="0.500" y="0.500" width="15" height="15" rx="1" fill="#fff" stroke="#4c5a5a"/><rect x="0.500" y="0.500" width="15" height="4.500" fill="#58a6f0" stroke="#2264ad" stroke-width="1"/><path d="M3 2.800h3.500M8 2.800h5" stroke="#a9d2f8" stroke-width="1"/><path d="M3 7.5h3M7.5 7.5h5.5M3 10h3M7.5 10h5.5M3 12.5h3M7.5 12.5h5.5" stroke="#9aa0a0" stroke-width="1"/></svg><div style="left:838px;top:12px;width:17.7px;height:18px;background:linear-gradient(#ffffff 0%,#f7f7f7 48%,#eaeaea 52%,#ededed 100%);border:1px solid #a3a3a3;border-radius:4.500px"></div><svg style="left:838px;top:12px;" width="18" height="18" viewBox="0 0 18 18"><path d="M5 12h8" stroke="#000" stroke-width="2.200"/></svg><div style="left:858px;top:12px;width:17.7px;height:18px;background:linear-gradient(#ffffff 0%,#f7f7f7 48%,#eaeaea 52%,#ededed 100%);border:1px solid #a3a3a3;border-radius:4.500px"></div><svg style="left:858px;top:12px;" width="18" height="18" viewBox="0 0 18 18"><rect x="5.200" y="5.600" width="7.600" height="7.200" fill="none" stroke="#000" stroke-width="1.300"/><path d="M4.550 5.600h8.900" stroke="#000" stroke-width="2.200"/></svg><div style="left:878px;top:12px;width:17.7px;height:18px;background:linear-gradient(#ffffff 0%,#f7f7f7 48%,#eaeaea 52%,#ededed 100%);border:1px solid #a3a3a3;border-radius:4.500px"></div><svg style="left:878px;top:12px;" width="18" height="18" viewBox="0 0 18 18"><path d="M5.300 5.200l7.400 7.400M12.700 5.200l-7.400 7.400" stroke="#000" stroke-width="2.500"/></svg><div style="left:673px;top:14px;width:163px;height:18px;white-space:nowrap;line-height:18px;font-size:13px;color:#141414;overflow:hidden;letter-spacing:-0.25px">Список: Динамика_рожд…</div><div style="left:648px;top:33px;width:236px;height:19px;background:linear-gradient(#fbfbfb,#e8e8e8);border-bottom:1px solid #b8b8b8"></div><div style="left:716px;top:33px;width:1px;height:19px;background:#c4c4c4"></div><div style="left:815px;top:33px;width:1px;height:19px;background:#dedede"></div><div class="t" style="left:687px;top:35px;font-size:13px;color:#141414">од</div><div class="t" style="left:732px;top:35px;font-size:13px;color:#141414">показатель</div><div style="left:883px;top:33px;width:13px;height:100px;background:#e3e3e3;border-left:1px solid #bdbdbd;border-right:1px solid #bdbdbd"></div><div style="left:884px;top:46px;width:11px;height:87px;background:linear-gradient(90deg,#f3f3f3,#ffffff 40%,#fbfbfb);border-bottom:1px solid #bdbdbd"></div><div style="left:884px;top:33px;width:11px;height:13px;background:linear-gradient(#ffffff,#f0f0f0);border-bottom:1px solid #c8c8c8"></div><svg style="left:886px;top:37px;" width="8" height="5" viewBox="0 0 8 5"><path d="M0 5l3.750-4.500 3.750 4.500z" fill="#555"/></svg><div style="left:782px;top:141px;width:200px;height:400px;background:#fff;border:1px solid #9a9a9a;border-radius:7px 7px 0 0"></div><div style="left:783px;top:142px;width:198px;height:22.5px;background:linear-gradient(#ffffff 0%,#f6f6f6 46%,#e9e9e9 54%,#e3e3e3 100%)"></div><div style="left:783px;top:164px;width:198px;height:1px;background:#8c8c8c"></div><svg style="left:902px;top:382px;" width="10" height="22" viewBox="0 0 10 22"><path d="M0 1.500C5.500 2.500 3.500 17 9.500 18.500" stroke="#ff40e6" stroke-width="2.200" fill="none"/></svg><svg style="left:902px;top:489px;" width="8" height="13" viewBox="0 0 8 13"><path d="M0.500 0.500C2.500 3 5.500 6.500 5 9.500 4 12 1.500 11.500 0.500 10.500z" fill="#9fe0ff" stroke="#2a7fe0" stroke-width="0.9"/></svg><div style="left:39px;top:20px;width:650px;height:412px;background:#f3f3f3;border:1px solid #9a9a9a;border-radius:7px 7px 0 0"></div><div style="left:40px;top:21px;width:648px;height:22.5px;background:linear-gradient(#ffffff 0%,#f6f6f6 46%,#e9e9e9 54%,#e3e3e3 100%);border-radius:6px 6px 0 0"></div><div style="left:40px;top:43px;width:648px;height:1px;background:#9a9a9a"></div><svg style="left:45px;top:24px;" width="16" height="16" viewBox="0 0 16 16"><rect x="0.500" y="0.500" width="15" height="15" rx="1" fill="#fff" stroke="#4c5a5a"/><rect x="0.500" y="0.500" width="15" height="4.500" fill="#58a6f0" stroke="#2264ad" stroke-width="1"/><path d="M3 2.800h3.500M8 2.800h5" stroke="#a9d2f8" stroke-width="1"/><path d="M3 7.5h3M7.5 7.5h5.5M3 10h3M7.5 10h5.5M3 12.5h3M7.5 12.5h5.5" stroke="#9aa0a0" stroke-width="1"/></svg><div style="left:625px;top:23px;width:17.7px;height:18px;background:linear-gradient(#ffffff 0%,#f7f7f7 48%,#eaeaea 52%,#ededed 100%);border:1px solid #a3a3a3;border-radius:4.500px"></div><svg style="left:625px;top:23px;" width="18" height="18" viewBox="0 0 18 18"><path d="M5 12h8" stroke="#000" stroke-width="2.200"/></svg><div style="left:645px;top:23px;width:17.7px;height:18px;background:linear-gradient(#ffffff 0%,#f7f7f7 48%,#eaeaea 52%,#ededed 100%);border:1px solid #a3a3a3;border-radius:4.500px"></div><svg style="left:645px;top:23px;" width="18" height="18" viewBox="0 0 18 18"><rect x="5.200" y="5.600" width="7.600" height="7.200" fill="none" stroke="#000" stroke-width="1.300"/><path d="M4.550 5.600h8.900" stroke="#000" stroke-width="2.200"/></svg><div style="left:665px;top:23px;width:17.7px;height:18px;background:linear-gradient(#ffffff 0%,#f7f7f7 48%,#eaeaea 52%,#ededed 100%);border:1px solid #a3a3a3;border-radius:4.500px"></div><svg style="left:665px;top:23px;" width="18" height="18" viewBox="0 0 18 18"><path d="M5.300 5.200l7.400 7.400M12.700 5.200l-7.400 7.400" stroke="#000" stroke-width="2.500"/></svg><div style="left:65px;top:25px;width:561px;height:18px;text-align:center;white-space:nowrap;line-height:18px;font-size:13px;color:#141414;overflow:hidden;letter-spacing:-0.1px">Список: Для_карт_за_2023_ряд_данных_02</div><div style="left:42px;top:43.5px;width:642px;height:385px;border:1px solid #a8a8a8;background:#fff"></div><div style="left:43px;top:44px;width:640px;height:21px;background:linear-gradient(#fbfbfb,#e6e6e6);border-bottom:1px solid #b8b8b8"></div><div style="left:102px;top:44px;width:1px;height:20px;background:#c0c0c0"></div><div style="left:507px;top:44px;width:1px;height:20px;background:#c0c0c0"></div><div style="left:43px;top:65px;width:20px;height:349px;background:repeating-linear-gradient(#fbfbfb 0px,#e5e5e5 19px,#b8b8b8 19px,#b8b8b8 20px)"></div><div style="left:62px;top:44px;width:1px;height:370px;background:#b8b8b8"></div><div style="left:63px;top:65px;width:620px;height:349px;background:repeating-linear-gradient(#fff 0px,#fff 19px,#d4d4d4 19px,#d4d4d4 20px)"></div><div style="left:670px;top:44px;width:13px;height:370px;background:#e3e3e3;border-left:1px solid #bdbdbd;border-right:1px solid #bdbdbd"></div><div style="left:671px;top:57px;width:11px;height:357px;background:linear-gradient(90deg,#f3f3f3,#ffffff 40%,#fbfbfb);border-bottom:1px solid #bdbdbd"></div><div style="left:671px;top:44px;width:11px;height:13px;background:linear-gradient(#ffffff,#f0f0f0);border-bottom:1px solid #c8c8c8"></div><svg style="left:673px;top:48px;" width="8" height="5" viewBox="0 0 8 5"><path d="M0 5l3.750-4.500 3.750 4.500z" fill="#555"/></svg><div style="left:43px;top:414px;width:627px;height:13px;background:linear-gradient(#ffffff,#f0f0f0);border-top:1px solid #bdbdbd;border-bottom:1px solid #bdbdbd"></div><div style="left:56px;top:415px;width:1px;height:11px;background:#c8c8c8"></div><svg style="left:47px;top:417px;" width="5" height="8" viewBox="0 0 5 8"><path d="M5 0l-5 4 5 4z" fill="#555"/></svg><div style="left:69px;top:51px;width:833px;height:520px;background:#f3f3f3;border:1px solid #9a9a9a;border-radius:7px 7px 0 0"></div><div style="left:70px;top:52px;width:831px;height:22.5px;background:linear-gradient(#ffffff 0%,#f6f6f6 46%,#e9e9e9 54%,#e3e3e3 100%);border-radius:6px 6px 0 0"></div><div style="left:70px;top:74px;width:831px;height:1px;background:#9a9a9a"></div><svg style="left:75px;top:55px;" width="14" height="16" viewBox="0 0 14 16"><rect x="0.5" y="0.5" width="13" height="15" rx="1" fill="#fff" stroke="#4c5a5a"/><rect x="0" y="0" width="2.6" height="16" fill="#3b86d8"/><path d="M5 3.5h6M5 13h6" stroke="#b5b5b5" stroke-width="0.8"/><rect x="5" y="5.5" width="6.5" height="5" fill="#f5a623" stroke="#9aa0a0" stroke-width="0.6"/><path d="M5.5 6.5l5.5 3M5.5 9.8l3-1.6" stroke="#fff" stroke-width="0.9"/></svg><div style="left:838px;top:54px;width:17.7px;height:18px;background:linear-gradient(#ffffff 0%,#f7f7f7 48%,#eaeaea 52%,#ededed 100%);border:1px solid #a3a3a3;border-radius:4.500px"></div><svg style="left:838px;top:54px;" width="18" height="18" viewBox="0 0 18 18"><path d="M5 12h8" stroke="#000" stroke-width="2.200"/></svg><div style="left:858px;top:54px;width:17.7px;height:18px;background:linear-gradient(#ffffff 0%,#f7f7f7 48%,#eaeaea 52%,#ededed 100%);border:1px solid #a3a3a3;border-radius:4.500px"></div><svg style="left:858px;top:54px;" width="18" height="18" viewBox="0 0 18 18"><rect x="5.200" y="5.600" width="7.600" height="7.200" fill="none" stroke="#000" stroke-width="1.300"/><path d="M4.550 5.600h8.900" stroke="#000" stroke-width="2.200"/></svg><div style="left:878px;top:54px;width:17.7px;height:18px;background:linear-gradient(#ffffff 0%,#f7f7f7 48%,#eaeaea 52%,#ededed 100%);border:1px solid #a3a3a3;border-radius:4.500px"></div><svg style="left:878px;top:54px;" width="18" height="18" viewBox="0 0 18 18"><path d="M5.300 5.200l7.400 7.400M12.700 5.200l-7.400 7.400" stroke="#000" stroke-width="2.500"/></svg><div style="left:93px;top:56px;width:746px;height:18px;text-align:center;white-space:nowrap;line-height:18px;font-size:13px;color:#141414;overflow:hidden;letter-spacing:-0.1px">Отчет: Новый</div><svg style="left:71px;top:75px;" width="813" height="445" viewBox="0 0 813 445"><rect x="0" y="0" width="813" height="445" fill="#ffffff"/><rect x="16" y="14" width="797" height="431" fill="#d2d2d2"/><rect x="51.500" y="44.500" width="262" height="387" fill="none" stroke="#8f8f8f" stroke-width="1" stroke-dasharray="2 1" shape-rendering="crispEdges"/><rect x="96.500" y="32.500" width="172" height="7" fill="none" stroke="#000" stroke-width="1" stroke-dasharray="4 2" shape-rendering="crispEdges"/><rect x="37.500" y="54.500" width="271" height="311" fill="none" stroke="#000" stroke-width="1" stroke-dasharray="4 2" shape-rendering="crispEdges"/><rect x="52.500" y="360.500" width="254" height="61" fill="none" stroke="#000" stroke-width="1" stroke-dasharray="4 2" shape-rendering="crispEdges"/><rect x="127.500" y="348.500" width="108" height="5" fill="none" stroke="#000" stroke-width="1" stroke-dasharray="4 2" shape-rendering="crispEdges"/><rect x="154.500" y="355.500" width="57" height="4" fill="none" stroke="#000" stroke-width="1" stroke-dasharray="3 1" shape-rendering="crispEdges"/><path d="M156 357.500h54M158 358.500h52" stroke="#000" stroke-width="1" stroke-dasharray="4 2" shape-rendering="crispEdges"/><rect x="181.500" y="433.500" width="4" height="7" fill="none" stroke="#000" stroke-width="1" stroke-dasharray="3 1" shape-rendering="crispEdges"/><rect x="20" y="17" width="213" height="304" fill="#ffffff"/><path d="M21.50 18V321M31.92 18V321M42.34 18V321M52.76 18V321M63.18 18V321M73.60 18V321M84.02 18V321M94.44 18V321M104.86 18V321M115.28 18V321M125.70 18V321M136.12 18V321M146.54 18V321M156.96 18V321M167.38 18V321M177.80 18V321M188.22 18V321M198.64 18V321M209.06 18V321M219.48 18V321M229.90 18V321M21 18.50H233M21 28.92H233M21 39.34H233M21 49.76H233M21 60.18H233M21 70.60H233M21 81.02H233M21 91.44H233M21 101.86H233M21 112.28H233M21 122.70H233M21 133.12H233M21 143.54H233M21 153.96H233M21 164.38H233M21 174.80H233M21 185.22H233M21 195.64H233M21 206.06H233M21 216.48H233M21 226.90H233M21 237.32H233M21 247.74H233M21 258.16H233M21 268.58H233M21 279.00H233M21 289.42H233M21 299.84H233M21 310.26H233M21 320.68H233" fill="none" stroke="#5c5c5c" stroke-width="1" stroke-dasharray="1 2" shape-rendering="crispEdges"/><path d="M233 44.500H51.500V321" fill="none" stroke="#b4b4b4" stroke-width="1" shape-rendering="crispEdges"/><text x="96.500" y="38.600" font-size="5.400" font-style="italic" fill="#3a3a3a" textLength="136" lengthAdjust="spacingAndGlyphs">Демографические показатели. Рождаемость насел</text><text x="84.500" y="73.500" font-size="4.300" fill="#8a8a8a" textLength="58" lengthAdjust="spacingAndGlyphs">Рождаемость населения 2023 г.</text><path d="M21.5 12v2M34.7 12v2M47.9 12v2M61.1 12v2M74.3 12v2M87.5 12v2M100.7 12v2M113.9 12v2M127.1 12v2M140.3 12v2M153.5 12v2M166.7 12v2M179.9 12v2M193.1 12v2M206.3 12v2M219.5 12v2M14 18.5h2M14 31.7h2M14 44.9h2M14 58.1h2M14 71.3h2M14 84.5h2M14 97.7h2M14 110.9h2M14 124.1h2M14 137.3h2M14 150.5h2M14 163.7h2M14 176.9h2M14 190.1h2M14 203.3h2M14 216.5h2M14 229.7h2M14 242.9h2M14 256.1h2M14 269.3h2M14 282.5h2M14 295.7h2M14 308.9h2M14 322.1h2" stroke="#000" stroke-width="1" shape-rendering="crispEdges"/><text x="21.7" y="10" font-size="7.600" text-anchor="middle" fill="#2a2a2a">0</text><text x="48.1" y="10" font-size="7.600" text-anchor="middle" fill="#2a2a2a">1</text><text x="74.5" y="10" font-size="7.600" text-anchor="middle" fill="#2a2a2a">2</text><text x="100.9" y="10" font-size="7.600" text-anchor="middle" fill="#2a2a2a">3</text><text x="127.3" y="10" font-size="7.600" text-anchor="middle" fill="#2a2a2a">4</text><text x="153.7" y="10" font-size="7.600" text-anchor="middle" fill="#2a2a2a">5</text><text x="180.1" y="10" font-size="7.600" text-anchor="middle" fill="#2a2a2a">6</text><text x="206.5" y="10" font-size="7.600" text-anchor="middle" fill="#2a2a2a">7</text><text transform="translate(12.200 18.7) rotate(-90)" font-size="7.600" text-anchor="middle" fill="#2a2a2a">0</text><text transform="translate(12.200 45.1) rotate(-90)" font-size="7.600" text-anchor="middle" fill="#2a2a2a">1</text><text transform="translate(12.200 71.5) rotate(-90)" font-size="7.600" text-anchor="middle" fill="#2a2a2a">2</text><text transform="translate(12.200 97.9) rotate(-90)" font-size="7.600" text-anchor="middle" fill="#2a2a2a">3</text><text transform="translate(12.200 124.3) rotate(-90)" font-size="7.600" text-anchor="middle" fill="#2a2a2a">4</text><text transform="translate(12.200 150.7) rotate(-90)" font-size="7.600" text-anchor="middle" fill="#2a2a2a">5</text><text transform="translate(12.200 177.1) rotate(-90)" font-size="7.600" text-anchor="middle" fill="#2a2a2a">6</text><text transform="translate(12.200 203.5) rotate(-90)" font-size="7.600" text-anchor="middle" fill="#2a2a2a">7</text><text transform="translate(12.200 229.9) rotate(-90)" font-size="7.600" text-anchor="middle" fill="#2a2a2a">8</text><text transform="translate(12.200 256.3) rotate(-90)" font-size="7.600" text-anchor="middle" fill="#2a2a2a">9</text><text transform="translate(12.200 282.7) rotate(-90)" font-size="7.600" text-anchor="middle" fill="#2a2a2a">10</text><text transform="translate(12.200 309.1) rotate(-90)" font-size="7.600" text-anchor="middle" fill="#2a2a2a">11</text><path d="M464 11h6l-3 3.500z" fill="#d0303a"/><path d="M11 242v5l3.500-2.500z" fill="#d0303a"/></svg><div style="left:884px;top:75px;width:13px;height:460px;background:#e3e3e3;border-left:1px solid #bdbdbd;border-right:1px solid #bdbdbd"></div><div style="left:885px;top:88px;width:11px;height:447px;background:linear-gradient(90deg,#f3f3f3,#ffffff 40%,#fbfbfb);border-bottom:1px solid #bdbdbd"></div><div style="left:885px;top:75px;width:11px;height:13px;background:linear-gradient(#ffffff,#f0f0f0);border-bottom:1px solid #c8c8c8"></div><svg style="left:887px;top:79px;" width="8" height="5" viewBox="0 0 8 5"><path d="M0 5l3.750-4.500 3.750 4.500z" fill="#555"/></svg><div style="left:898px;top:75px;width:1px;height:460px;background:#8c8c8c"></div><div style="left:884px;top:509px;width:13px;height:6px;background:#f4f4f4;border-top:1px solid #bdbdbd"></div><div style="left:886px;top:513px;width:9px;height:2px;background:#555"></div></div>
<div style="left:1129px;top:170px;width:13px;height:515px;background:#e3e3e3;border-left:1px solid #bdbdbd;border-right:1px solid #bdbdbd"></div>
<div style="left:1130px;top:183px;width:11px;height:396px;background:linear-gradient(90deg,#f3f3f3,#ffffff 40%,#fbfbfb);border-bottom:1px solid #bdbdbd"></div>
<div style="left:1130px;top:170px;width:11px;height:13px;background:linear-gradient(#ffffff,#f0f0f0);border-bottom:1px solid #c8c8c8"></div>
<svg style="left:1132px;top:174px;" width="8" height="5" viewBox="0 0 8 5"><path d="M0 5l3.750-4.500 3.750 4.500z" fill="#555"/></svg>
<div style="left:1130px;top:671px;width:11px;height:14px;background:linear-gradient(#ffffff,#f0f0f0);border-top:1px solid #bdbdbd;border-bottom:1px solid #bdbdbd"></div>
<svg style="left:1132px;top:676px;" width="8" height="5" viewBox="0 0 8 5"><path d="M0 0l3.750 4.500 3.750-4.500z" fill="#555"/></svg>
<div style="left:218px;top:685px;width:911px;height:13px;background:#e3e3e3;border-top:1px solid #bdbdbd;border-bottom:1px solid #bdbdbd"></div>
<div style="left:231px;top:686px;width:823px;height:11px;background:linear-gradient(#ffffff,#f1f1f1);border-left:1px solid #c8c8c8;border-right:1px solid #bdbdbd"></div>
<div style="left:218px;top:686px;width:13px;height:11px;background:linear-gradient(#ffffff,#f0f0f0);border-left:1px solid #bdbdbd"></div>
<svg style="left:222px;top:688px;" width="5" height="8" viewBox="0 0 5 8"><path d="M5 0l-5 4 5 4z" fill="#555"/></svg>
<div style="left:1116px;top:686px;width:13px;height:11px;background:linear-gradient(#ffffff,#f0f0f0);border-left:1px solid #bdbdbd;border-right:1px solid #bdbdbd"></div>
<svg style="left:1120px;top:688px;" width="5" height="8" viewBox="0 0 5 8"><path d="M0 0l5 4-5 4z" fill="#555"/></svg>
<div style="left:1130px;top:686px;width:12px;height:12px;background:#f1f1f1"></div>
<!-- status -->
<div style="left:0px;top:702px;width:200px;height:24px;border:1px solid #c2c2c2;background:#ebebeb"></div>
<div class="t" style="left:2px;top:705px;font-size:13px;color:#141414;letter-spacing:-0.250px">16,85 дюйм</div>
<div class="t" style="left:103px;top:705px;font-size:13px;color:#141414;letter-spacing:-0.250px">8,62 дюйм</div>
<div style="left:206px;top:702px;width:89px;height:24px;border:1px solid #c2c2c2;background:#ebebeb"></div>
<div class="t" style="left:208px;top:705px;font-size:13px;color:#141414;letter-spacing:-0.350px">Масштаб: 26%</div>
<div style="left:301px;top:702px;width:91px;height:24px;border:1px solid #c2c2c2;background:#ebebeb"></div>
<svg style="left:305px;top:709px;" width="10" height="10" viewBox="0 0 10 10"><circle cx="5" cy="5" r="4.200" fill="#ee6e66"/><circle cx="4.300" cy="4.200" r="2" fill="#f58f86" opacity="0.7"/></svg>
<div class="t" style="left:318px;top:705px;font-size:13px;color:#141414">Узлы: Выкл.</div>
<div style="left:1320px;top:702px;width:44px;height:24px;border:1px solid #c2c2c2;background:#ebebeb"></div>
<div class="t" style="left:1327px;top:705px;font-size:13px;color:#141414">0</div>
<svg style="left:1341px;top:706px;" width="17" height="17" viewBox="0 0 17 17"><path d="M8.500 1.500c-3 0-5 2.400-5 5.500v3.500l-2 2.800h14l-2-2.800v-3.500c0-3.100-2-5.500-5-5.500z" fill="#f5c211"/><path d="M6.500 14a2 2 0 0 0 4 0z" fill="#444"/><circle cx="8.500" cy="1.500" r="1" fill="#f5c211"/></svg>
<!-- taskbar -->
<div style="left:0px;top:727px;width:1366px;height:41px;background:#1a1a1a"></div>
<div style="left:1356px;top:727px;width:10px;height:41px;background:#2b2b2b"></div>
<svg style="left:7px;top:734px;" width="28" height="28" viewBox="0 0 28 28"><rect x="0" y="0" width="8" height="8" fill="#b04a00"/><rect x="10" y="0" width="8" height="8" fill="#ff7a0d"/><rect x="20" y="0" width="8" height="8" fill="#c85a00"/><rect x="0" y="10" width="8" height="8" fill="#ff8a26"/><rect x="10" y="10" width="8" height="8" fill="#d96400"/><rect x="20" y="10" width="8" height="8" fill="#ff7a0d"/><rect x="0" y="20" width="8" height="8" fill="#e86c00"/><rect x="10" y="20" width="8" height="8" fill="#b04a00"/><rect x="20" y="20" width="8" height="8" fill="#a84500"/></svg>
<div class="t" style="left:42px;top:741.5px;font-size:9.400px;color:#f0f0f0;line-height:12px;-webkit-text-stroke:0.350px #f0f0f0;letter-spacing:-0.150px">Menu</div>
<svg style="left:80px;top:734px;" width="28" height="28" viewBox="0 0 28 28"><circle cx="14" cy="14" r="12.700" fill="#1a1a1a" stroke="#f2f2f2" stroke-width="2"/><path d="M8.500 8v8.500a3 3 0 0 0 3 3h5a3 3 0 0 0 3-3v-5a2.100 2.100 0 0 0-4.200 0v4.500M15.300 11.500a2.100 2.100 0 0 0-4.200 0v4.500" fill="none" stroke="#f2f2f2" stroke-width="1.900" stroke-linecap="round" stroke-linejoin="round"/></svg>
<svg style="left:123px;top:733px;" width="28" height="28" viewBox="0 0 28 28"><defs><linearGradient id="ffg" x1="0" y1="0" x2="0" y2="1"><stop offset="0" stop-color="#ff7a3d"/><stop offset="1" stop-color="#f0345a"/></linearGradient></defs><rect x="0" y="0.500" width="28" height="27.500" rx="6" fill="url(#ffg)"/><path d="M8 9.500c0.200-1.500 0.800-2.600 1.800-3.500 0 1 0.400 1.800 1 2.300 0.800-1.800 2.500-2.800 4.200-3.800-0.300 1 0 1.800 0.500 2.400 0.500-1 1.300-1.700 2.500-2-0.500 1-0.400 2 0.300 3 1.800 1.500 2.900 3.600 2.900 6a8.200 8.200 0 0 1-16.400 0c0-1.700 0.500-3.300 1.400-4.400 0.300 0.800 0.900 0.800 1.800 0z" fill="#fff"/><circle cx="15" cy="14.800" r="3.900" fill="#f2455c"/><path d="M9.500 11.500c1.700-1 3.600-0.800 5 0.200l-1.800 2.300c-0.800-0.500-1.700-0.300-2.200 0.500z" fill="#f2455c"/></svg>
<svg style="left:166px;top:733px;" width="28" height="28" viewBox="0 0 28 28"><rect x="0" y="0.500" width="28" height="27.500" rx="6" fill="#3d6fc4"/><rect x="0" y="0.500" width="28" height="14" rx="6" fill="#4a86d8"/><rect x="4" y="7" width="20" height="14.500" rx="1" fill="#f4f2ec"/><path d="M4.500 7.500l9.500 8 9.500-8M4.500 21l7-7M23.500 21l-7-7" stroke="#9a9a96" stroke-width="0.9" fill="none"/></svg>
<svg style="left:209px;top:733px;" width="28" height="28" viewBox="0 0 28 28"><rect x="0" y="0.500" width="28" height="27.500" rx="6" fill="#2c2c2c" stroke="#111" stroke-width="0.800"/><text x="3.500" y="11.500" font-size="9.500" font-weight="bold" fill="#f2f2f2" font-family="&quot;Liberation Mono&quot;,monospace">$_</text></svg>
<svg style="left:251px;top:734px;" width="30" height="27" viewBox="0 0 30 27"><path d="M1 3.500a2 2 0 0 1 2-2h8l3 3h13a2 2 0 0 1 2 2v17a2 2 0 0 1-2 2h-24a2 2 0 0 1-2-2z" fill="#e2a94a"/><rect x="3" y="5.500" width="23" height="4" rx="1" fill="#f5f0e6"/><path d="M1 9.500a2 2 0 0 1 2-2h24a2 2 0 0 1 2 2v14a2 2 0 0 1-2 2h-24a2 2 0 0 1-2-2z" fill="#f7c272"/></svg>
<svg style="left:295px;top:734px;" width="28" height="28" viewBox="0 0 28 28"><rect x="0" y="0" width="28" height="28" rx="6" fill="#5b5b5b"/><path d="M14 0h8a6 6 0 0 1 6 6v8h-14z" fill="#6a6a6a"/><path d="M14 14h14v8a6 6 0 0 1-6 6h-8z" fill="#f57a1c"/><path d="M14 0v28M0 14h28" stroke="#3c3c3c" stroke-width="1"/><path d="M4.500 7h5M7 4.500v5M18.500 7h5M5 18.500l4.500 4.500M9.500 18.500l-4.500 4.500M18.500 19.500h5M18.500 22.500h5" stroke="#fff" stroke-width="1.500" fill="none"/></svg>
<svg style="left:338px;top:734px;" width="28" height="28" viewBox="0 0 28 28"><rect x="0" y="0" width="28" height="28" rx="6" fill="#2b3a2b" stroke="#151d15" stroke-width="0.800"/><path d="M3 16h5l1.500-4 2 -6 2.500 17 2-10 1.500 3h7.500" stroke="#25d14a" stroke-width="1.400" fill="none" stroke-linejoin="round"/></svg>
<svg style="left:379px;top:731px;" width="32" height="32" viewBox="0 0 32 32"><defs><linearGradient id="pdfg" x1="0" y1="0" x2="1" y2="1"><stop offset="0" stop-color="#d8232f"/><stop offset="1" stop-color="#8f0f18"/></linearGradient></defs><rect x="0" y="0.500" width="32" height="31" rx="5" fill="url(#pdfg)"/><text x="3.500" y="12" font-size="9.500" font-weight="bold" fill="#fff" font-family="&quot;Liberation Sans&quot;,sans-serif" textLength="18">PDF</text><path d="M12 27l2.500-6 14-9.500 3 4.500-14 9.500z" fill="#fff"/><path d="M16 21.500l13-9M17.500 24l13-9" stroke="#b51a25" stroke-width="1.100"/><path d="M12 27l1.200-3 1.800 2.300z" fill="#7a0c14"/></svg>
<svg style="left:424px;top:734px;" width="28" height="28" viewBox="0 0 28 28"><rect x="0" y="0" width="28" height="28" rx="6" fill="#e8912a"/><rect x="0" y="0" width="28" height="14" rx="6" fill="#f0a030"/><circle cx="14" cy="14" r="9" fill="#fff"/><circle cx="14" cy="9.300" r="1.500" fill="#e8912a"/><rect x="12.700" y="12" width="2.600" height="7.500" rx="1" fill="#e8912a"/></svg>
<div style="left:463px;top:727px;width:37px;height:41px;background:#4b4b4b"></div>
<svg style="left:465px;top:735px;" width="33" height="27" viewBox="0 0 33 27"><path d="M1 4l10-3.500 10.500 3 10.500-3.500v22l-10.500 3.500-10.500-3-10 3.500z" fill="#e84a25"/><path d="M11 0.500v22M21.500 3.500v22" stroke="#c23a18" stroke-width="1"/><path d="M3 5.800l8-2.800 10.500 3 8.500-2.800v17.500l-8.500 2.800-10.500-3-8 2.800z" fill="none" stroke="#fff" stroke-width="2"/></svg>
<div style="left:118px;top:765px;width:38px;height:3px;background:#1f9ede"></div>
<div style="left:161px;top:765px;width:38px;height:3px;background:#1f9ede"></div>
<div style="left:247px;top:765px;width:38px;height:3px;background:#1f9ede"></div>
<div style="left:463px;top:765px;width:37px;height:3px;background:#1f9ede"></div>
<div class="t" style="left:524px;top:732px;font-size:13.300px;color:#ededed;line-height:16px;-webkit-text-stroke:0.450px #ededed">↑ 1.4 KB/s</div>
<div class="t" style="left:521px;top:748.5px;font-size:13.300px;color:#ededed;line-height:16px;-webkit-text-stroke:0.450px #ededed">↓ 21.9 KB/s</div>
<svg style="left:602px;top:736px;" width="24" height="24" viewBox="0 0 24 24"><circle cx="12" cy="12" r="11.500" fill="#56647f"/><circle cx="12" cy="12" r="7.800" fill="none" stroke="#e9e3d0" stroke-width="2.600" stroke-dasharray="1.600 1.460"/><circle cx="12" cy="12" r="6.300" fill="#e9e3d0"/><path d="M12 7.200a4.800 4.800 0 0 0 0 9.600z" fill="#56647f"/><circle cx="12" cy="12" r="4.800" fill="none" stroke="#56647f" stroke-width="0.900"/></svg>
<svg style="left:638px;top:739px;" width="18" height="18" viewBox="0 0 18 18"><rect x="0" y="0" width="18" height="18" rx="4" fill="#8f1118"/><rect x="1" y="1" width="16" height="8" rx="3.500" fill="#c0202a"/><path d="M5.500 4.500h7c0 3-1.300 5-3.500 5s-3.500-2-3.500-5zM9 9.500v3.500M6.500 13.500h5" stroke="#fff" stroke-width="1.100" fill="#fff" stroke-linejoin="round"/></svg>
<svg style="left:668px;top:739px;" width="18" height="18" viewBox="0 0 18 18"><path d="M7.500 1.500v2M2.200 3.700l1.500 1.500M0.500 9h2M12.800 3.700l-1.500 1.500" stroke="#f2f2f2" stroke-width="1.400" stroke-linecap="round"/><path d="M4.600 10.500a3.300 3.300 0 1 1 5.800-2.700" fill="none" stroke="#f2f2f2" stroke-width="1.500"/><path d="M7 16.500h7.500a2.800 2.800 0 0 0 0.300-5.600 3.600 3.600 0 0 0-6.800-0.400 3 3 0 0 0-1 6z" fill="none" stroke="#f2f2f2" stroke-width="1.500" stroke-linejoin="round"/></svg>
<div class="t" style="left:691px;top:739.5px;font-size:13.600px;color:#ededed;line-height:18px;-webkit-text-stroke:0.450px #ededed">Переменная облачность 13 °C</div>
<svg style="left:900px;top:740px;" width="14" height="16" viewBox="0 0 14 16"><rect x="0.800" y="0.800" width="12.400" height="14.400" rx="2" fill="none" stroke="#f2f2f2" stroke-width="1.500"/><path d="M7 4.500l3 3.500h-6zM4 9.500h6v1.600h-6z" fill="#f2f2f2"/></svg>
<svg style="left:931px;top:739px;" width="12" height="18" viewBox="0 0 12 18"><rect x="0" y="0" width="12" height="18" rx="6" fill="#4a4a4a"/><path d="M3.500 5.500l5 5-2.500 2.500v-9l2.500 2.500-5 5" fill="none" stroke="#1f1f1f" stroke-width="1.100"/></svg>
<svg style="left:954px;top:739px;" width="17" height="18" viewBox="0 0 17 18"><path d="M8.500 1c2 1.500 4.500 2 7 2 0 6-1.500 10.500-7 14-5.500-3.500-7-8-7-14 2.500 0 5-0.500 7-2z" fill="none" stroke="#f2f2f2" stroke-width="1.500" stroke-linejoin="round"/><path d="M8.500 4.300c1.400 0.900 2.800 1.300 4.300 1.400-0.200 3.800-1.300 6.200-4.300 8.300-3-2.100-4.100-4.500-4.300-8.300 1.500-0.100 2.900-0.500 4.300-1.400z" fill="#bdbdbd"/></svg>
<svg style="left:980px;top:741px;" width="17" height="13" viewBox="0 0 17 13"><path d="M6 0.500h10.500v12h-10.500z" fill="#d8d8d8"/><path d="M0.500 6.500c2-3.500 6-4.500 9-3 1.500 1 2 2 2.500 3-1 2-3 3.500-5.500 3.500-2 0-3.500-1.500-3.500-3 0.500-1.500 2-2.300 3.500-2 1 0.300 1.500 1 1.800 1.800-0.500 0.900-1.200 1.300-2 1.300" fill="none" stroke="#1a1a1a" stroke-width="1.100"/><path d="M0.500 6.500c2-3.500 6-4.500 9-3" fill="none" stroke="#d8d8d8" stroke-width="1.200"/></svg>
<svg style="left:1012px;top:739px;" width="18" height="18" viewBox="0 0 18 18"><path d="M8 2.500c-2.800 0-4.500 2.200-4.500 5v3.500l-2 2.500h13l-2-2.500v-3.500c0-2.800-1.700-5-4.500-5z" fill="#f2f2f2"/><path d="M6 14.500a2 2 0 0 0 4 0z" fill="#f2f2f2"/><circle cx="13.500" cy="4" r="3.200" fill="#f2f2f2" stroke="#1a1a1a" stroke-width="1"/></svg>
<div class="t" style="left:1032px;top:739.5px;font-size:13.600px;color:#ededed;line-height:18px;-webkit-text-stroke:0.450px #ededed">2</div>
<svg style="left:1051px;top:738px;" width="27" height="20" viewBox="0 0 27 20"><defs><clipPath id="flc"><rect x="0" y="0" width="27" height="19.500" rx="2.500"/></clipPath></defs><g clip-path="url(#flc)"><rect width="27" height="6.500" fill="#f4f4f4"/><rect y="6.500" width="27" height="6.500" fill="#1530a8"/><rect y="13" width="27" height="6.500" fill="#e0202a"/></g></svg>
<svg style="left:1091px;top:739px;" width="18" height="16" viewBox="0 0 18 16"><path d="M1.200 5.500a11.500 11.500 0 0 1 15.600 0" fill="none" stroke="#8c8c8c" stroke-width="1.800" stroke-linecap="round"/><path d="M3.700 8.300a7.800 7.800 0 0 1 10.600 0M6.200 11a4.100 4.100 0 0 1 5.600 0" fill="none" stroke="#f2f2f2" stroke-width="1.800" stroke-linecap="round"/><circle cx="9" cy="13.700" r="1.400" fill="#f2f2f2"/></svg>
<svg style="left:1119px;top:740px;" width="16" height="16" viewBox="0 0 16 16"><path d="M1 5.500h3l4.500-4.500v14l-4.500-4.500h-3z" fill="#f2f2f2"/><path d="M10.800 4.500a4.500 4.500 0 0 1 0 7" fill="none" stroke="#f2f2f2" stroke-width="1.700" stroke-linecap="round"/></svg>
<svg style="left:1149px;top:738px;" width="14" height="20" viewBox="0 0 14 20"><rect x="1" y="3" width="11.500" height="15.500" rx="1.800" fill="none" stroke="#f2f2f2" stroke-width="1.700"/><rect x="4" y="0.800" width="5.500" height="2.400" fill="#f2f2f2"/><rect x="3.300" y="5.500" width="6.900" height="10.700" fill="#d0d0d0"/></svg>
<div class="t" style="left:1175px;top:739.5px;font-size:13.800px;color:#ededed;line-height:18px;-webkit-text-stroke:0.450px #ededed">Воскресенье,</div>
<div class="t" style="left:1274px;top:739.5px;font-size:13.400px;color:#ededed;line-height:18px;-webkit-text-stroke:0.450px #ededed">4 мая, 19:28</div>
</body></html>
